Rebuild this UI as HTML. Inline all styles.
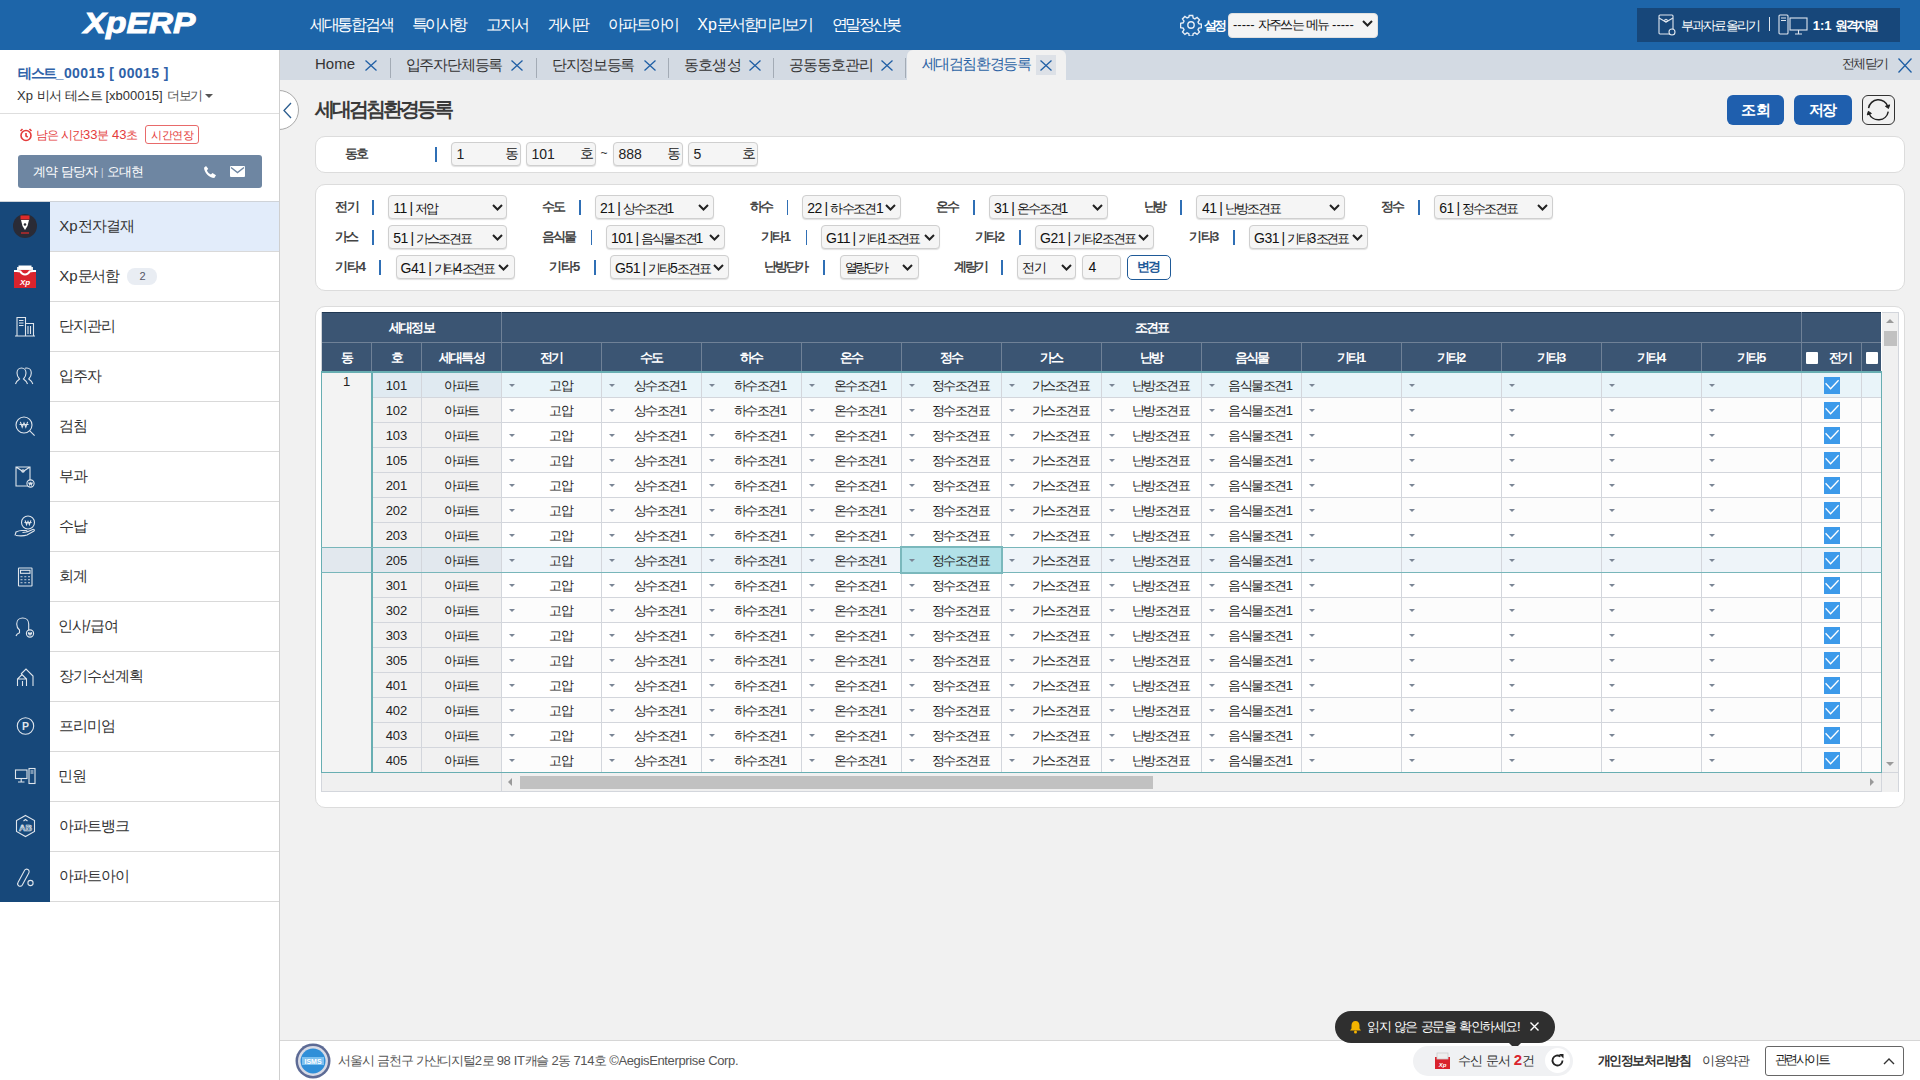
<!DOCTYPE html><html><head><meta charset="utf-8"><style>
*{box-sizing:border-box;margin:0;padding:0}
html,body{width:1920px;height:1080px;overflow:hidden;background:#f1f1f1;font-family:"Liberation Sans",sans-serif;color:#222}
.a{position:absolute;white-space:nowrap}
.k{letter-spacing:var(--k,0);font-size:var(--kf,1em)}
.panel{position:absolute;left:315px;width:1590px;background:#fff;border:1px solid #dcdcdc;border-radius:10px}
.box{position:absolute;height:24px;border:1px solid #cfcfcf;border-radius:4px;background:#f5f5f5;box-shadow:0 1px 1px rgba(0,0,0,.12)}
.bsep{position:absolute;width:2px;height:15px;background:#2f6fb5}
.c{position:absolute;height:25px;border-right:1px solid #d3d6dc;border-bottom:1px solid #d3d6dc;font-size:13px;text-align:center;line-height:25px;color:#222;--k:-1.5px}
.ghd{position:absolute;height:29px;line-height:29px;color:#fff;font-size:13px;font-weight:bold;text-align:center;--k:-1.8px}
.dd{position:absolute;left:7px;top:11px;width:0;height:0;border-left:3px solid transparent;border-right:3px solid transparent;border-top:3px solid #7a8595}
</style></head><body>
<div class="a" style="left:0px;top:0px;width:1920px;height:50px;background:#1d65a9;"></div>
<svg class="a" style="left:80px;top:4px" width="122" height="40" viewBox="0 0 122 40"><text x="3.5" y="29.1" font-size="29.7" font-weight="bold" font-style="italic" fill="#fff" stroke="#fff" stroke-width="0.9" font-family="Liberation Sans" textLength="112" lengthAdjust="spacingAndGlyphs">XpERP</text></svg>
<div class="a" style="left:310.00px;top:13.50px;font-size:16px;line-height:22px;color:#fff;font-weight:normal;--k:-2.30px;"><span class=k>세대통합검색</span></div>
<div class="a" style="left:412.30px;top:13.50px;font-size:16px;line-height:22px;color:#fff;font-weight:normal;--k:-2.87px;"><span class=k>특이사항</span></div>
<div class="a" style="left:486.00px;top:13.50px;font-size:16px;line-height:22px;color:#fff;font-weight:normal;--k:-1.85px;"><span class=k>고지서</span></div>
<div class="a" style="left:548.20px;top:13.50px;font-size:16px;line-height:22px;color:#fff;font-weight:normal;--k:-3.10px;"><span class=k>게시판</span></div>
<div class="a" style="left:608.30px;top:13.50px;font-size:16px;line-height:22px;color:#fff;font-weight:normal;--k:-2.00px;"><span class=k>아파트아이</span></div>
<div class="a" style="left:697.30px;top:13.50px;font-size:16px;line-height:22px;color:#fff;font-weight:normal;--k:-2.50px;">Xp<span class=k>문서함미리보기</span></div>
<div class="a" style="left:831.70px;top:13.50px;font-size:16px;line-height:22px;color:#fff;font-weight:normal;--k:-2.43px;"><span class=k>연말정산봇</span></div>
<svg class="a" style="left:1180px;top:14px" width="22" height="22" viewBox="0 0 22 22"><g fill="none" stroke="#e8eef6" stroke-width="1.4"><path d="M9.3 1.5h3.4l.5 2.6 1.7.8 2.2-1.5 2.4 2.4-1.5 2.2.8 1.7 2.6.5v3.4l-2.6.5-.8 1.7 1.5 2.2-2.4 2.4-2.2-1.5-1.7.8-.5 2.6H9.3l-.5-2.6-1.7-.8-2.2 1.5-2.4-2.4 1.5-2.2-.8-1.7-2.6-.5V9.3l2.6-.5.8-1.7-1.5-2.2 2.4-2.4 2.2 1.5 1.7-.8z"/><circle cx="11" cy="11" r="3.2"/></g></svg>
<div class="a" style="left:1204.00px;top:16.60px;font-size:13px;line-height:17px;color:#fff;font-weight:bold;--k:-3.50px;"><span class=k>설정</span></div>
<div class="a" style="left:1228px;top:13px;width:150px;height:25px;background:#f4f4f4;border-radius:4px;border:1px solid #e0e0e0"></div>
<div class="a" style="left:1233.00px;top:15.80px;font-size:13px;line-height:18px;color:#111;font-weight:normal;--k:-1.90px;">----- <span class=k>자주쓰는</span> <span class=k>메뉴</span> -----</div>
<svg class="a" style="left:1362px;top:20px" width="11" height="7" viewBox="0 0 11 7"><path d="M1 1l4.5 4.5L10 1" fill="none" stroke="#222" stroke-width="2"/></svg>
<div class="a" style="left:1637px;top:8px;width:263px;height:34px;background:#17477a;"></div>
<svg class="a" style="left:1658px;top:14px" width="18" height="22" viewBox="0 0 18 22"><g fill="none" stroke="#dfe6ee" stroke-width="1.1"><rect x="1" y="1" width="14" height="19" rx="1"/><path d="M1 4l7 4 7-4"/><circle cx="8" cy="6.5" r="1.3"/><circle cx="14" cy="18" r="3" fill="#17477a"/></g></svg>
<div class="a" style="left:1680.70px;top:16.50px;font-size:13px;line-height:18px;color:#fff;font-weight:normal;--k:-1.78px;"><span class=k>부과자료올리기</span></div>
<div class="a" style="left:1769px;top:17px;width:1px;height:14px;background:#dfe6ee;"></div>
<svg class="a" style="left:1778px;top:14px" width="32" height="22" viewBox="0 0 32 22"><g fill="none" stroke="#dfe6ee" stroke-width="1.1"><rect x="1" y="1" width="9" height="19" rx="1"/><path d="M3 4h5M3 6.5h5"/><rect x="12" y="4" width="17" height="12"/><path d="M17 20h7M20.5 16v4"/></g></svg>
<div class="a" style="left:1812.75px;top:16.50px;font-size:13px;line-height:18px;color:#fff;font-weight:bold;--k:-2.65px;">1:1 <span class=k>원격지원</span></div>
<div class="a" style="left:0px;top:50px;width:280px;height:1030px;background:#fff;border-right:1px solid #cfcfcf"></div>
<div class="a" style="left:18.30px;top:63.50px;font-size:14px;line-height:18px;color:#2f62a8;font-weight:bold;--k:-1.53px;;letter-spacing:0.4px"><span class=k>테스트</span>_00015 [ 00015 ]</div>
<div class="a" style="left:17.00px;top:86.50px;font-size:13px;line-height:17px;color:#333;font-weight:normal;--k:-0.66px;;letter-spacing:0px">Xp <span class=k>비서</span> <span class=k>테스트</span> [xb00015]</div>
<div class="a" style="left:167.30px;top:86.50px;font-size:13px;line-height:17px;color:#555;font-weight:normal;--k:-1.65px;"><span class=k>더보기</span></div>
<div class="a" style="left:205px;top:94px;width:0;height:0;border-left:4px solid transparent;border-right:4px solid transparent;border-top:4px solid #555"></div>
<div class="a" style="left:0px;top:113px;width:279px;height:1px;background:#dedede;"></div>
<svg class="a" style="left:19px;top:128px" width="14" height="14" viewBox="0 0 14 14"><g fill="none" stroke="#e43b3b" stroke-width="1.6"><circle cx="7" cy="7.5" r="5"/><path d="M7 5v3l1.8 1.2M1.5 3l2-2M12.5 3l-2-2"/></g></svg>
<div class="a" style="left:35.70px;top:126.00px;font-size:13px;line-height:17px;color:#e43b3b;font-weight:normal;--k:-1.08px;;--kf:0.92em"><span class=k>남은</span> <span class=k>시간</span>33<span class=k>분</span> 43<span class=k>초</span></div>
<div class="a" style="left:145px;top:125px;width:54px;height:19px;background:#fff;border:1px solid #e86a6a;border-radius:3px"></div>
<div class="a" style="left:151.30px;top:126.50px;font-size:12px;line-height:16px;color:#e43b3b;font-weight:normal;--k:-0.53px;;--kf:0.92em"><span class=k>시간연장</span></div>
<div class="a" style="left:18px;top:155px;width:244px;height:33px;background:#6e86a2;border-radius:3px"></div>
<div class="a" style="left:33.00px;top:162.50px;font-size:13px;line-height:17px;color:#fff;font-weight:normal;--k:-0.90px;"><span class=k>계약</span> <span class=k>담당자</span> <span style="color:#c8d2de;font-size:11px">|</span> <span class=k>오대현</span></div>
<svg class="a" style="left:203px;top:165px" width="14" height="14" viewBox="0 0 14 14"><path d="M3 1l2.2 2.8-1.3 1.6c.8 1.8 2.2 3.2 4 4l1.6-1.3L13 10.3 11.3 13C6 12.5 1.5 8 1 2.7z" fill="#fff"/></svg>
<svg class="a" style="left:230px;top:166px" width="15" height="11" viewBox="0 0 15 11"><rect width="15" height="11" rx="1" fill="#fff"/><path d="M1 1.5l6.5 5 6.5-5" fill="none" stroke="#6e86a2" stroke-width="1.4"/></svg>
<div class="a" style="left:0px;top:201px;width:279px;height:1px;background:#cfd3d8;"></div>
<div class="a" style="left:0px;top:202px;width:279px;height:50px;background:#e2ecfa;border-bottom:1px solid #d9d9d9"></div>
<svg class="a" style="left:0;top:202px" width="50" height="50" viewBox="0 0 50 50"><rect width="50" height="50" fill="#17487a"/><g transform="translate(0,-2)"><circle cx="25" cy="26" r="12" fill="#2a2b36"/><path d="M20.5 15.5h9v4h-9z" fill="#e02a2a"/><path d="M21 20h8l-1.5 6-2.5 4-2.5-4z" fill="#fff"/><circle cx="25" cy="24.5" r="1.3" fill="#2a2b36"/><path d="M21 33h8" stroke="#e02a2a" stroke-width="1.2"/></g></svg>
<div class="a" style="left:59.30px;top:216.30px;font-size:15px;line-height:20px;color:#333;font-weight:normal;--k:-0.77px;">Xp<span class=k>전자결재</span></div>
<div class="a" style="left:0px;top:252px;width:279px;height:50px;background:#fff;border-bottom:1px solid #d9d9d9"></div>
<svg class="a" style="left:0;top:252px" width="50" height="50" viewBox="0 0 50 50"><rect width="50" height="50" fill="#17487a"/><g transform="translate(0,-2)"><path d="M17 17h16v6H17z" fill="#e8e8e8"/><path d="M18.5 15.5h13v4h-13z" fill="#fff"/><path d="M14 20h22v18H14z" fill="#d9232d"/><path d="M14 20c3 0 5 0 7 .5 1 2 2.5 3 4 3s3-1 4-3c2-.5 4-.5 7-.5v2c-2 0-4 0-5.5.3-1.2 2-3 3.2-5.5 3.2s-4.3-1.2-5.5-3.2C18 22 16 22 14 22z" fill="#fff"/><text x="25" y="35" font-size="8" font-weight="bold" font-style="italic" fill="#fff" text-anchor="middle" font-family="Liberation Sans">Xp</text></g></svg>
<div class="a" style="left:59.30px;top:266.30px;font-size:15px;line-height:20px;color:#333;font-weight:normal;--k:-1.40px;">Xp<span class=k>문서함</span></div>
<div class="a" style="left:0px;top:302px;width:279px;height:50px;background:#fff;border-bottom:1px solid #d9d9d9"></div>
<svg class="a" style="left:0;top:302px" width="50" height="50" viewBox="0 0 50 50"><rect width="50" height="50" fill="#17487a"/><g transform="translate(0,-2)"><g fill="none" stroke="#dfe5ec" stroke-width="1.1"><path d="M17 17.5h8.5v18.5H17zM25.5 23.5h8v12.5h-8M15 36h20M19 20.5h4.5M19 23h4.5M19 25.5h4.5M28 26v8M30.5 26v8"/></g></g></svg>
<div class="a" style="left:59.30px;top:316.30px;font-size:15px;line-height:20px;color:#333;font-weight:normal;--k:-1.08px;"><span class=k>단지관리</span></div>
<div class="a" style="left:0px;top:352px;width:279px;height:50px;background:#fff;border-bottom:1px solid #d9d9d9"></div>
<svg class="a" style="left:0;top:352px" width="50" height="50" viewBox="0 0 50 50"><rect width="50" height="50" fill="#17487a"/><g transform="translate(0,-2)"><g fill="none" stroke="#dfe5ec" stroke-width="1.1"><path d="M15.5 34c1-3 2.5-4 4-5-1.5-1.5-2.5-3.5-2.5-6 0-3 2-5 4.5-5s4.5 2 4.5 5c0 2.5-1 4.5-2.5 6 1.5 1 3 2 4 5"/><path d="M25 18.3c.6-.2 1.2-.3 1.8-.3 2.5 0 4.5 2 4.5 5 0 2.5-1 4.5-2.5 6 1.5 1 3 2 4 5"/></g></g></svg>
<div class="a" style="left:59.30px;top:366.30px;font-size:15px;line-height:20px;color:#333;font-weight:normal;--k:-1.08px;"><span class=k>입주자</span></div>
<div class="a" style="left:0px;top:402px;width:279px;height:50px;background:#fff;border-bottom:1px solid #d9d9d9"></div>
<svg class="a" style="left:0;top:402px" width="50" height="50" viewBox="0 0 50 50"><rect width="50" height="50" fill="#17487a"/><g transform="translate(0,-2)"><circle cx="24" cy="25" r="8" fill="none" stroke="#dfe5ec" stroke-width="1.1"/><path d="M29.8 30.8l4.8 4.8" fill="none" stroke="#dfe5ec" stroke-width="1.1"/><path d="M20.4 21.8l1.7999999999999998 5.4l1.7999999999999998 -4.199999999999999l1.7999999999999998 4.199999999999999l1.7999999999999998 -5.4M19.5 24.5h9.0" fill="none" stroke="#dfe5ec" stroke-width="1.1"/></g></svg>
<div class="a" style="left:59.30px;top:416.30px;font-size:15px;line-height:20px;color:#333;font-weight:normal;--k:-1.08px;"><span class=k>검침</span></div>
<div class="a" style="left:0px;top:452px;width:279px;height:50px;background:#fff;border-bottom:1px solid #d9d9d9"></div>
<svg class="a" style="left:0;top:452px" width="50" height="50" viewBox="0 0 50 50"><rect width="50" height="50" fill="#17487a"/><g transform="translate(0,-2)"><g fill="none" stroke="#dfe5ec" stroke-width="1.1"><path d="M16 17h14v19H16zM16 17l7 4.5 7-4.5"/><circle cx="23" cy="21" r="1.2"/></g><circle cx="30.5" cy="33.5" r="3.6" fill="#17487a" stroke="#dfe5ec" stroke-width="1.1"/><path d="M28.82 32.24l0.84 2.52l0.84 -1.9599999999999997l0.84 1.9599999999999997l0.84 -2.52M28.4 33.5h4.199999999999999" fill="none" stroke="#dfe5ec" stroke-width="1.1"/></g></svg>
<div class="a" style="left:59.30px;top:466.30px;font-size:15px;line-height:20px;color:#333;font-weight:normal;--k:-1.08px;"><span class=k>부과</span></div>
<div class="a" style="left:0px;top:502px;width:279px;height:50px;background:#fff;border-bottom:1px solid #d9d9d9"></div>
<svg class="a" style="left:0;top:502px" width="50" height="50" viewBox="0 0 50 50"><rect width="50" height="50" fill="#17487a"/><g transform="translate(0,-2)"><circle cx="28" cy="22.5" r="6.5" fill="none" stroke="#dfe5ec" stroke-width="1.1"/><path d="M25.12 20.34l1.44 4.32l1.44 -3.36l1.44 3.36l1.44 -4.32M24.4 22.5h7.199999999999999" fill="none" stroke="#dfe5ec" stroke-width="1.1"/><path d="M15 35.5l1-3.5c2-1 4-1.5 6-1.5h4c1 0 1.5 1 .5 1.5l-4 .5M16 35.5c4 .5 8 .5 11-.5l7-4c1-1-.2-2-1.3-1.6L27 32" fill="none" stroke="#dfe5ec" stroke-width="1.1"/></g></svg>
<div class="a" style="left:59.30px;top:516.30px;font-size:15px;line-height:20px;color:#333;font-weight:normal;--k:-1.08px;"><span class=k>수납</span></div>
<div class="a" style="left:0px;top:552px;width:279px;height:50px;background:#fff;border-bottom:1px solid #d9d9d9"></div>
<svg class="a" style="left:0;top:552px" width="50" height="50" viewBox="0 0 50 50"><rect width="50" height="50" fill="#17487a"/><g transform="translate(0,-2)"><g fill="none" stroke="#dfe5ec" stroke-width="1.1"><rect x="18.5" y="18" width="13.5" height="18" rx=".5"/><rect x="20.5" y="20.3" width="9.5" height="3"/></g><g fill="#9fb2c6"><rect x="20.5" y="26" width="2" height="1.3"/><rect x="24.3" y="26" width="2" height="1.3"/><rect x="28" y="26" width="2" height="1.3"/><rect x="20.5" y="29" width="2" height="1.3"/><rect x="24.3" y="29" width="2" height="1.3"/><rect x="28" y="29" width="2" height="1.3"/><rect x="20.5" y="32" width="2" height="1.3"/><rect x="24.3" y="32" width="2" height="1.3"/><rect x="28" y="32" width="2" height="1.3"/></g></g></svg>
<div class="a" style="left:59.30px;top:566.30px;font-size:15px;line-height:20px;color:#333;font-weight:normal;--k:-1.08px;"><span class=k>회계</span></div>
<div class="a" style="left:0px;top:602px;width:279px;height:50px;background:#fff;border-bottom:1px solid #d9d9d9"></div>
<svg class="a" style="left:0;top:602px" width="50" height="50" viewBox="0 0 50 50"><rect width="50" height="50" fill="#17487a"/><g transform="translate(0,-2)"><path d="M16 36c.5-1.5 2-2.5 3.5-3.2v-2.8c-1.8-1.5-2.8-3.5-2.8-6 0-3.5 2.5-6 6-6s6 2.5 6 6v6" fill="none" stroke="#dfe5ec" stroke-width="1.1"/><circle cx="30" cy="33.5" r="3.6" fill="#17487a" stroke="#dfe5ec" stroke-width="1.1"/><path d="M28.32 32.24l0.84 2.52l0.84 -1.9599999999999997l0.84 1.9599999999999997l0.84 -2.52M27.9 33.5h4.199999999999999" fill="none" stroke="#dfe5ec" stroke-width="1.1"/></g></svg>
<div class="a" style="left:58.30px;top:616.30px;font-size:15px;line-height:20px;color:#333;font-weight:normal;--k:-1.08px;"><span class=k>인사</span>/<span class=k>급여</span></div>
<div class="a" style="left:0px;top:652px;width:279px;height:50px;background:#fff;border-bottom:1px solid #d9d9d9"></div>
<svg class="a" style="left:0;top:652px" width="50" height="50" viewBox="0 0 50 50"><rect width="50" height="50" fill="#17487a"/><g transform="translate(0,-2)"><path d="M17.5 36v-7l4.5-4.5 4.5 4.5M17.5 29h9v7M22.5 36v-5M21 24l5-5 7 7v10" fill="none" stroke="#dfe5ec" stroke-width="1.1" stroke-width="1.3"/></g></svg>
<div class="a" style="left:59.30px;top:666.30px;font-size:15px;line-height:20px;color:#333;font-weight:normal;--k:-1.08px;"><span class=k>장기수선계획</span></div>
<div class="a" style="left:0px;top:702px;width:279px;height:50px;background:#fff;border-bottom:1px solid #d9d9d9"></div>
<svg class="a" style="left:0;top:702px" width="50" height="50" viewBox="0 0 50 50"><rect width="50" height="50" fill="#17487a"/><g transform="translate(0,-2)"><circle cx="25.5" cy="26" r="8.2" fill="none" stroke="#dfe5ec" stroke-width="1.1"/><text x="25.5" y="29.8" font-size="10.5" font-weight="bold" fill="#dfe5ec" text-anchor="middle" font-family="Liberation Sans">P</text></g></svg>
<div class="a" style="left:59.30px;top:716.30px;font-size:15px;line-height:20px;color:#333;font-weight:normal;--k:-1.08px;"><span class=k>프리미엄</span></div>
<div class="a" style="left:0px;top:752px;width:279px;height:50px;background:#fff;border-bottom:1px solid #d9d9d9"></div>
<svg class="a" style="left:0;top:752px" width="50" height="50" viewBox="0 0 50 50"><rect width="50" height="50" fill="#17487a"/><g transform="translate(0,-2)"><g fill="none" stroke="#dfe5ec" stroke-width="1.1"><rect x="15.5" y="20" width="11.5" height="8.5"/><path d="M21.2 28.5v3M18 32h6.5"/><rect x="29" y="18.5" width="6" height="15"/><path d="M30.5 21h3M30.5 23h3"/></g></g></svg>
<div class="a" style="left:58.30px;top:766.30px;font-size:15px;line-height:20px;color:#333;font-weight:normal;--k:-1.08px;"><span class=k>민원</span></div>
<div class="a" style="left:0px;top:802px;width:279px;height:50px;background:#fff;border-bottom:1px solid #d9d9d9"></div>
<svg class="a" style="left:0;top:802px" width="50" height="50" viewBox="0 0 50 50"><rect width="50" height="50" fill="#17487a"/><g transform="translate(0,-2)"><path d="M25.5 15.5l9 5v11l-9 5-9-5v-11z" fill="none" stroke="#dfe5ec" stroke-width="1.1" stroke-width="1.3"/><text x="25.5" y="31" font-size="9" font-weight="bold" fill="none" stroke="#dfe5ec" stroke-width=".7" text-anchor="middle" font-family="Liberation Sans">AB</text><path d="M23.5 21l2-1.5 2 1.5" fill="none" stroke="#dfe5ec" stroke-width="1.1"/></g></svg>
<div class="a" style="left:59.30px;top:816.30px;font-size:15px;line-height:20px;color:#333;font-weight:normal;--k:-1.08px;"><span class=k>아파트뱅크</span></div>
<div class="a" style="left:0px;top:852px;width:279px;height:50px;background:#fff;border-bottom:1px solid #d9d9d9"></div>
<svg class="a" style="left:0;top:852px" width="50" height="50" viewBox="0 0 50 50"><rect width="50" height="50" fill="#17487a"/><g transform="translate(0,-2)"><path d="M18 32.5l6.5-12c.7-1.3 2.2-1.7 3.4-1s1.6 2.2.9 3.4l-6.5 12c-.7 1.3-2.2 1.7-3.4 1s-1.6-2.2-.9-3.4z" fill="none" stroke="#dfe5ec" stroke-width="1.1" stroke-width="1.2"/><circle cx="30.5" cy="33" r="2.6" fill="none" stroke="#dfe5ec" stroke-width="1.1" stroke-width="1.2"/></g></svg>
<div class="a" style="left:59.30px;top:866.30px;font-size:15px;line-height:20px;color:#333;font-weight:normal;--k:-1.08px;"><span class=k>아파트아이</span></div>
<div class="a" style="left:127px;top:268px;width:30px;height:17px;background:#e9edf3;border-radius:8px"></div>
<div class="a" style="left:139.50px;top:269.00px;font-size:11px;line-height:14px;color:#556;font-weight:normal;--k:-1.54px;">2</div>
<div class="a" style="left:280px;top:50px;width:1640px;height:30px;background:#d3dae3;"></div>
<div class="a" style="left:315.00px;top:55.30px;font-size:15px;line-height:18px;color:#333;font-weight:normal;--k:-2.10px;">Home</div>
<svg class="a" style="left:365px;top:60px" width="12" height="11" viewBox="0 0 12 11"><path d="M.5 .5L11.5 10.5M11.5 .5L.5 10.5" stroke="#1f5fa5" stroke-width="1.3"/></svg>
<div class="a" style="left:390px;top:58px;width:1px;height:20px;background:#a3abb5;"></div>
<div class="a" style="left:405.70px;top:55.60px;font-size:15px;line-height:18px;color:#333;font-weight:normal;--k:-1.22px;"><span class=k>입주자단체등록</span></div>
<svg class="a" style="left:511px;top:60px" width="12" height="11" viewBox="0 0 12 11"><path d="M.5 .5L11.5 10.5M11.5 .5L.5 10.5" stroke="#1f5fa5" stroke-width="1.3"/></svg>
<div class="a" style="left:536px;top:58px;width:1px;height:20px;background:#a3abb5;"></div>
<div class="a" style="left:552.00px;top:55.60px;font-size:15px;line-height:18px;color:#333;font-weight:normal;--k:-1.34px;"><span class=k>단지정보등록</span></div>
<svg class="a" style="left:644px;top:60px" width="12" height="11" viewBox="0 0 12 11"><path d="M.5 .5L11.5 10.5M11.5 .5L.5 10.5" stroke="#1f5fa5" stroke-width="1.3"/></svg>
<div class="a" style="left:668px;top:58px;width:1px;height:20px;background:#a3abb5;"></div>
<div class="a" style="left:684.00px;top:55.60px;font-size:15px;line-height:18px;color:#333;font-weight:normal;--k:-0.77px;"><span class=k>동호생성</span></div>
<svg class="a" style="left:749px;top:60px" width="12" height="11" viewBox="0 0 12 11"><path d="M.5 .5L11.5 10.5M11.5 .5L.5 10.5" stroke="#1f5fa5" stroke-width="1.3"/></svg>
<div class="a" style="left:773px;top:58px;width:1px;height:20px;background:#a3abb5;"></div>
<div class="a" style="left:789.30px;top:55.60px;font-size:15px;line-height:18px;color:#333;font-weight:normal;--k:-1.14px;"><span class=k>공동동호관리</span></div>
<svg class="a" style="left:881px;top:60px" width="12" height="11" viewBox="0 0 12 11"><path d="M.5 .5L11.5 10.5M11.5 .5L.5 10.5" stroke="#1f5fa5" stroke-width="1.3"/></svg>
<div class="a" style="left:905px;top:58px;width:1px;height:20px;background:#a3abb5;"></div>
<div class="a" style="left:907px;top:50px;width:159px;height:30px;background:#f1f1f1;border-radius:6px 6px 0 0"></div>
<div class="a" style="left:921.70px;top:55.00px;font-size:15px;line-height:18px;color:#2d64a5;font-weight:normal;--k:-1.43px;"><span class=k>세대검침환경등록</span></div>
<div class="a" style="left:1036px;top:55px;width:20px;height:20px;background:#dde1e7;"></div>
<svg class="a" style="left:1040px;top:60px" width="12" height="11" viewBox="0 0 12 11"><path d="M.5 .5L11.5 10.5M11.5 .5L.5 10.5" stroke="#1f5fa5" stroke-width="1.3"/></svg>
<div class="a" style="left:1842.30px;top:55.00px;font-size:13px;line-height:18px;color:#333;font-weight:normal;--k:-1.87px;"><span class=k>전체닫기</span></div>
<svg class="a" style="left:1898px;top:58px" width="14" height="15" viewBox="0 0 14 15"><path d="M.5 .5L13.5 14.5M13.5 .5L.5 14.5" stroke="#1f5fa5" stroke-width="1.3"/></svg>
<div class="a" style="left:259px;top:90px;width:40px;height:40px;border-radius:50%;background:#fff;border:1px solid #a8a8a8;clip-path:inset(0 0 0 21px)"></div>
<svg class="a" style="left:282.5px;top:101.5px" width="9" height="17" viewBox="0 0 9 17"><path d="M8 1L1 8.5 8 16" fill="none" stroke="#2b5d8f" stroke-width="1.3"/></svg>
<div class="a" style="left:315.00px;top:95.80px;font-size:20px;line-height:26px;color:#3a3a3a;font-weight:bold;--k:-3.00px;"><span class=k>세대검침환경등록</span></div>
<div class="a" style="left:1727px;top:95px;width:57px;height:30px;background:#1f5fae;border-radius:6px"></div>
<div class="a" style="left:1740.70px;top:99.70px;font-size:15px;line-height:20px;color:#fff;font-weight:bold;--k:0.60px;"><span class=k>조회</span></div>
<div class="a" style="left:1794px;top:95px;width:58px;height:30px;background:#1f5fae;border-radius:6px"></div>
<div class="a" style="left:1809.00px;top:99.70px;font-size:15px;line-height:20px;color:#fff;font-weight:bold;--k:-1.70px;"><span class=k>저장</span></div>
<div class="a" style="left:1862px;top:95px;width:33px;height:30px;background:transparent;border:1px solid #333;border-radius:6px"></div>
<svg class="a" style="left:1866px;top:98px" width="25" height="24" viewBox="0 0 25 24"><g fill="none" stroke="#222" stroke-width="1.5"><path d="M2.55 10.06A10 10 0 0 1 21.86 8.54"/><path d="M22.25 13.54A10 10 0 0 1 3.0 15.22"/></g><path d="M22.51 10.43L23.61 6.87L19.45 8.31z" fill="#222" stroke="#222" stroke-width="1"/><path d="M2.32 13.34L1.27 16.91L5.41 15.41z" fill="#222" stroke="#222" stroke-width="1"/></svg>
<div class="panel" style="top:136px;height:37px"></div>
<div class="a" style="left:344.90px;top:144.70px;font-size:13px;line-height:17px;color:#444;font-weight:bold;--k:-1.40px;"><span class=k>동호</span></div>
<div class="bsep" style="left:435px;top:147px;width:1.5px"></div>
<div class="box" style="left:451px;top:142px;width:70px"></div>
<div class="a" style="left:456.50px;top:144.50px;font-size:14px;line-height:18px;color:#222;font-weight:normal;--k:-1.96px;">1</div>
<div class="a" style="left:504.50px;top:144.00px;font-size:14px;line-height:18px;color:#222;font-weight:normal;--k:0.00px;"><span class=k>동</span></div>
<div class="box" style="left:526px;top:142px;width:70px"></div>
<div class="a" style="left:531.50px;top:144.50px;font-size:14px;line-height:18px;color:#222;font-weight:normal;--k:-1.96px;">101</div>
<div class="a" style="left:579.50px;top:144.00px;font-size:14px;line-height:18px;color:#222;font-weight:normal;--k:0.00px;"><span class=k>호</span></div>
<div class="box" style="left:613px;top:142px;width:70px"></div>
<div class="a" style="left:618.50px;top:144.50px;font-size:14px;line-height:18px;color:#222;font-weight:normal;--k:-1.96px;">888</div>
<div class="a" style="left:666.50px;top:144.00px;font-size:14px;line-height:18px;color:#222;font-weight:normal;--k:0.00px;"><span class=k>동</span></div>
<div class="box" style="left:688px;top:142px;width:70px"></div>
<div class="a" style="left:693.50px;top:144.50px;font-size:14px;line-height:18px;color:#222;font-weight:normal;--k:-1.96px;">5</div>
<div class="a" style="left:741.50px;top:144.00px;font-size:14px;line-height:18px;color:#222;font-weight:normal;--k:0.00px;"><span class=k>호</span></div>
<div class="a" style="left:600.60px;top:145.00px;font-size:12px;line-height:16px;color:#333;font-weight:normal;--k:-1.68px;">~</div>
<div class="panel" style="top:184px;height:107px"></div>
<div class="a" style="left:335.25px;top:198.00px;font-size:13px;line-height:17px;color:#444;font-weight:bold;--k:-1.15px;"><span class=k>전기</span></div>
<div class="bsep" style="left:372px;top:200px;width:1.5px"></div>
<div class="box" style="left:388px;top:195px;width:119px"></div>
<div class="a" style="left:393.30px;top:198.50px;font-size:14px;line-height:18px;color:#111;font-weight:normal;--k:-2.12px;word-spacing:-0.8px;--kf:0.96em;letter-spacing:-0.5px">11 | <span class=k>저압</span></div>
<svg class="a" style="left:492px;top:204px" width="11" height="7" viewBox="0 0 11 7"><path d="M1 1l4.5 4.5L10 1" fill="none" stroke="#222" stroke-width="2"/></svg>
<div class="a" style="left:542.30px;top:198.00px;font-size:13px;line-height:17px;color:#444;font-weight:bold;--k:-2.10px;"><span class=k>수도</span></div>
<div class="bsep" style="left:579px;top:200px;width:1.5px"></div>
<div class="box" style="left:595px;top:195px;width:119px"></div>
<div class="a" style="left:600.00px;top:198.50px;font-size:14px;line-height:18px;color:#111;font-weight:normal;--k:-2.12px;word-spacing:-0.8px;--kf:0.96em;letter-spacing:-0.5px">21 | <span class=k>상수조견</span>1</div>
<svg class="a" style="left:698px;top:204px" width="11" height="7" viewBox="0 0 11 7"><path d="M1 1l4.5 4.5L10 1" fill="none" stroke="#222" stroke-width="2"/></svg>
<div class="a" style="left:750.20px;top:198.00px;font-size:13px;line-height:17px;color:#444;font-weight:bold;--k:-2.40px;"><span class=k>하수</span></div>
<div class="bsep" style="left:786.5px;top:200px;width:1.5px"></div>
<div class="box" style="left:802px;top:195px;width:99px"></div>
<div class="a" style="left:807.30px;top:198.50px;font-size:14px;line-height:18px;color:#111;font-weight:normal;--k:-1.57px;word-spacing:-0.8px;--kf:0.96em;letter-spacing:-0.5px">22 | <span class=k>하수조견</span>1</div>
<svg class="a" style="left:885px;top:204px" width="11" height="7" viewBox="0 0 11 7"><path d="M1 1l4.5 4.5L10 1" fill="none" stroke="#222" stroke-width="2"/></svg>
<div class="a" style="left:936.20px;top:198.00px;font-size:13px;line-height:17px;color:#444;font-weight:bold;--k:-1.70px;"><span class=k>온수</span></div>
<div class="bsep" style="left:973px;top:200px;width:1.5px"></div>
<div class="box" style="left:989px;top:195px;width:119px"></div>
<div class="a" style="left:994.00px;top:198.50px;font-size:14px;line-height:18px;color:#111;font-weight:normal;--k:-2.12px;word-spacing:-0.8px;--kf:0.96em;letter-spacing:-0.5px">31 | <span class=k>온수조견</span>1</div>
<svg class="a" style="left:1092px;top:204px" width="11" height="7" viewBox="0 0 11 7"><path d="M1 1l4.5 4.5L10 1" fill="none" stroke="#222" stroke-width="2"/></svg>
<div class="a" style="left:1143.80px;top:198.00px;font-size:13px;line-height:17px;color:#444;font-weight:bold;--k:-2.80px;"><span class=k>난방</span></div>
<div class="bsep" style="left:1180px;top:200px;width:1.5px"></div>
<div class="box" style="left:1196px;top:195px;width:149px"></div>
<div class="a" style="left:1202.00px;top:198.50px;font-size:14px;line-height:18px;color:#111;font-weight:normal;--k:-2.05px;word-spacing:-0.8px;--kf:0.96em;letter-spacing:-0.5px">41 | <span class=k>난방조견표</span></div>
<svg class="a" style="left:1329px;top:204px" width="11" height="7" viewBox="0 0 11 7"><path d="M1 1l4.5 4.5L10 1" fill="none" stroke="#222" stroke-width="2"/></svg>
<div class="a" style="left:1381.00px;top:198.00px;font-size:13px;line-height:17px;color:#444;font-weight:bold;--k:-2.10px;"><span class=k>정수</span></div>
<div class="bsep" style="left:1418px;top:200px;width:1.5px"></div>
<div class="box" style="left:1434px;top:195px;width:119px"></div>
<div class="a" style="left:1439.30px;top:198.50px;font-size:14px;line-height:18px;color:#111;font-weight:normal;--k:-2.10px;word-spacing:-0.8px;--kf:0.96em;letter-spacing:-0.5px">61 | <span class=k>정수조견표</span></div>
<svg class="a" style="left:1537px;top:204px" width="11" height="7" viewBox="0 0 11 7"><path d="M1 1l4.5 4.5L10 1" fill="none" stroke="#222" stroke-width="2"/></svg>
<div class="a" style="left:335.25px;top:228.00px;font-size:13px;line-height:17px;color:#444;font-weight:bold;--k:-1.85px;"><span class=k>가스</span></div>
<div class="bsep" style="left:372px;top:230px;width:1.5px"></div>
<div class="box" style="left:388px;top:225px;width:119px"></div>
<div class="a" style="left:393.30px;top:228.50px;font-size:14px;line-height:18px;color:#111;font-weight:normal;--k:-2.03px;word-spacing:-0.8px;--kf:0.96em;letter-spacing:-0.5px">51 | <span class=k>가스조견표</span></div>
<svg class="a" style="left:492px;top:234px" width="11" height="7" viewBox="0 0 11 7"><path d="M1 1l4.5 4.5L10 1" fill="none" stroke="#222" stroke-width="2"/></svg>
<div class="a" style="left:542.30px;top:228.00px;font-size:13px;line-height:17px;color:#444;font-weight:bold;--k:-2.10px;"><span class=k>음식물</span></div>
<div class="bsep" style="left:590.5px;top:230px;width:1.5px"></div>
<div class="box" style="left:606px;top:225px;width:119px"></div>
<div class="a" style="left:611.00px;top:228.50px;font-size:14px;line-height:18px;color:#111;font-weight:normal;--k:-2.12px;word-spacing:-0.8px;--kf:0.96em;letter-spacing:-0.5px">101 | <span class=k>음식물조견</span>1</div>
<svg class="a" style="left:709px;top:234px" width="11" height="7" viewBox="0 0 11 7"><path d="M1 1l4.5 4.5L10 1" fill="none" stroke="#222" stroke-width="2"/></svg>
<div class="a" style="left:760.90px;top:228.00px;font-size:13px;line-height:17px;color:#444;font-weight:bold;--k:-1.55px;"><span class=k>기타</span>1</div>
<div class="bsep" style="left:805.5px;top:230px;width:1.5px"></div>
<div class="box" style="left:821px;top:225px;width:119px"></div>
<div class="a" style="left:826.00px;top:228.50px;font-size:14px;line-height:18px;color:#111;font-weight:normal;--k:-2.38px;word-spacing:-0.8px;--kf:0.96em;letter-spacing:-0.5px">G11 | <span class=k>기타</span>1<span class=k>조견표</span></div>
<svg class="a" style="left:924px;top:234px" width="11" height="7" viewBox="0 0 11 7"><path d="M1 1l4.5 4.5L10 1" fill="none" stroke="#222" stroke-width="2"/></svg>
<div class="a" style="left:974.90px;top:228.00px;font-size:13px;line-height:17px;color:#444;font-weight:bold;--k:-1.55px;"><span class=k>기타</span>2</div>
<div class="bsep" style="left:1019px;top:230px;width:1.5px"></div>
<div class="box" style="left:1035px;top:225px;width:119px"></div>
<div class="a" style="left:1040.00px;top:228.50px;font-size:14px;line-height:18px;color:#111;font-weight:normal;--k:-2.12px;word-spacing:-0.8px;--kf:0.96em;letter-spacing:-0.5px">G21 | <span class=k>기타</span>2<span class=k>조견표</span></div>
<svg class="a" style="left:1138px;top:234px" width="11" height="7" viewBox="0 0 11 7"><path d="M1 1l4.5 4.5L10 1" fill="none" stroke="#222" stroke-width="2"/></svg>
<div class="a" style="left:1189.20px;top:228.00px;font-size:13px;line-height:17px;color:#444;font-weight:bold;--k:-1.60px;"><span class=k>기타</span>3</div>
<div class="bsep" style="left:1233px;top:230px;width:1.5px"></div>
<div class="box" style="left:1249px;top:225px;width:119px"></div>
<div class="a" style="left:1254.00px;top:228.50px;font-size:14px;line-height:18px;color:#111;font-weight:normal;--k:-2.38px;word-spacing:-0.8px;--kf:0.96em;letter-spacing:-0.5px">G31 | <span class=k>기타</span>3<span class=k>조견표</span></div>
<svg class="a" style="left:1352px;top:234px" width="11" height="7" viewBox="0 0 11 7"><path d="M1 1l4.5 4.5L10 1" fill="none" stroke="#222" stroke-width="2"/></svg>
<div class="a" style="left:335.25px;top:258.00px;font-size:13px;line-height:17px;color:#444;font-weight:bold;--k:-1.32px;"><span class=k>기타</span>4</div>
<div class="bsep" style="left:379px;top:260px;width:1.5px"></div>
<div class="box" style="left:396px;top:255px;width:119px"></div>
<div class="a" style="left:400.60px;top:258.50px;font-size:14px;line-height:18px;color:#111;font-weight:normal;--k:-2.58px;word-spacing:-0.8px;--kf:0.96em;letter-spacing:-0.5px">G41 | <span class=k>기타</span>4<span class=k>조견표</span></div>
<svg class="a" style="left:498px;top:264px" width="11" height="7" viewBox="0 0 11 7"><path d="M1 1l4.5 4.5L10 1" fill="none" stroke="#222" stroke-width="2"/></svg>
<div class="a" style="left:549.30px;top:258.00px;font-size:13px;line-height:17px;color:#444;font-weight:bold;--k:-1.15px;"><span class=k>기타</span>5</div>
<div class="bsep" style="left:594px;top:260px;width:1.5px"></div>
<div class="box" style="left:610px;top:255px;width:119px"></div>
<div class="a" style="left:615.00px;top:258.50px;font-size:14px;line-height:18px;color:#111;font-weight:normal;--k:-2.12px;word-spacing:-0.8px;--kf:0.96em;letter-spacing:-0.5px">G51 | <span class=k>기타</span>5<span class=k>조견표</span></div>
<svg class="a" style="left:713px;top:264px" width="11" height="7" viewBox="0 0 11 7"><path d="M1 1l4.5 4.5L10 1" fill="none" stroke="#222" stroke-width="2"/></svg>
<div class="a" style="left:764.00px;top:258.00px;font-size:13px;line-height:17px;color:#444;font-weight:bold;--k:-2.17px;"><span class=k>난방단가</span></div>
<div class="bsep" style="left:823px;top:260px;width:1.5px"></div>
<div class="box" style="left:840px;top:255px;width:79px"></div>
<div class="a" style="left:844.50px;top:257.50px;font-size:14px;line-height:18px;color:#111;font-weight:normal;--k:-2.43px;word-spacing:-0.8px;--kf:0.96em;letter-spacing:-0.5px"><span class=k>열량단가</span></div>
<svg class="a" style="left:902px;top:264px" width="11" height="7" viewBox="0 0 11 7"><path d="M1 1l4.5 4.5L10 1" fill="none" stroke="#222" stroke-width="2"/></svg>
<div class="a" style="left:954.00px;top:258.00px;font-size:13px;line-height:17px;color:#444;font-weight:bold;--k:-2.05px;"><span class=k>계량기</span></div>
<div class="bsep" style="left:1001px;top:260px;width:1.5px"></div>
<div class="box" style="left:1017px;top:255px;width:59px"></div>
<div class="a" style="left:1022.30px;top:257.50px;font-size:14px;line-height:18px;color:#111;font-weight:normal;--k:-1.60px;word-spacing:-0.8px;--kf:0.96em;letter-spacing:-0.5px"><span class=k>전기</span></div>
<svg class="a" style="left:1061px;top:264px" width="11" height="7" viewBox="0 0 11 7"><path d="M1 1l4.5 4.5L10 1" fill="none" stroke="#222" stroke-width="2"/></svg>
<div class="box" style="left:1082px;top:255px;width:39px"></div>
<div class="a" style="left:1088.40px;top:257.50px;font-size:14px;line-height:18px;color:#111;font-weight:normal;--k:-1.96px;">4</div>
<div class="a" style="left:1127px;top:255px;width:44px;height:25px;background:#fff;border:1.5px solid #1f5a98;border-radius:5px"></div>
<div class="a" style="left:1137.40px;top:258.00px;font-size:13px;line-height:17px;color:#1f5a98;font-weight:bold;--k:-2.10px;"><span class=k>변경</span></div>
<div class="panel" style="top:306px;height:502px"></div>
<div class="a" style="left:321px;top:312px;width:1px;height:60px;background:#cfd3d8;"></div>
<div class="a" style="left:322px;top:312px;width:1559px;height:60px;background:#3b5573;"></div>
<div class="a" style="left:322px;top:312px;width:1559px;height:1px;background:#1f3752;"></div>
<div class="a" style="left:322px;top:342px;width:1559px;height:1px;background:#6f8197;"></div>
<div class="a" style="left:501px;top:312px;width:1px;height:60px;background:#6f8197;"></div>
<div class="a" style="left:1801px;top:312px;width:1px;height:60px;background:#6f8197;"></div>
<div class="a" style="left:371px;top:343px;width:1px;height:29px;background:#6f8197;"></div>
<div class="a" style="left:421px;top:343px;width:1px;height:29px;background:#6f8197;"></div>
<div class="a" style="left:601px;top:343px;width:1px;height:29px;background:#6f8197;"></div>
<div class="a" style="left:701px;top:343px;width:1px;height:29px;background:#6f8197;"></div>
<div class="a" style="left:801px;top:343px;width:1px;height:29px;background:#6f8197;"></div>
<div class="a" style="left:901px;top:343px;width:1px;height:29px;background:#6f8197;"></div>
<div class="a" style="left:1001px;top:343px;width:1px;height:29px;background:#6f8197;"></div>
<div class="a" style="left:1101px;top:343px;width:1px;height:29px;background:#6f8197;"></div>
<div class="a" style="left:1201px;top:343px;width:1px;height:29px;background:#6f8197;"></div>
<div class="a" style="left:1301px;top:343px;width:1px;height:29px;background:#6f8197;"></div>
<div class="a" style="left:1401px;top:343px;width:1px;height:29px;background:#6f8197;"></div>
<div class="a" style="left:1501px;top:343px;width:1px;height:29px;background:#6f8197;"></div>
<div class="a" style="left:1601px;top:343px;width:1px;height:29px;background:#6f8197;"></div>
<div class="a" style="left:1701px;top:343px;width:1px;height:29px;background:#6f8197;"></div>
<div class="a" style="left:1861px;top:343px;width:1px;height:29px;background:#6f8197;"></div>
<div class="a ghd" style="left:322px;top:313px;width:179px;"><span class=k>세대정보</span></div>
<div class="a ghd" style="left:502px;top:313px;width:1299px;"><span class=k>조견표</span></div>
<div class="a ghd" style="left:322px;top:343px;width:49px;"><span class=k>동</span></div>
<div class="a ghd" style="left:372px;top:343px;width:49px;"><span class=k>호</span></div>
<div class="a ghd" style="left:422px;top:343px;width:79px;"><span class=k>세대특성</span></div>
<div class="a ghd" style="left:502px;top:343px;width:99px;"><span class=k>전기</span></div>
<div class="a ghd" style="left:602px;top:343px;width:99px;"><span class=k>수도</span></div>
<div class="a ghd" style="left:702px;top:343px;width:99px;"><span class=k>하수</span></div>
<div class="a ghd" style="left:802px;top:343px;width:99px;"><span class=k>온수</span></div>
<div class="a ghd" style="left:902px;top:343px;width:99px;"><span class=k>정수</span></div>
<div class="a ghd" style="left:1002px;top:343px;width:99px;"><span class=k>가스</span></div>
<div class="a ghd" style="left:1102px;top:343px;width:99px;"><span class=k>난방</span></div>
<div class="a ghd" style="left:1202px;top:343px;width:99px;"><span class=k>음식물</span></div>
<div class="a ghd" style="left:1302px;top:343px;width:99px;"><span class=k>기타</span>1</div>
<div class="a ghd" style="left:1402px;top:343px;width:99px;"><span class=k>기타</span>2</div>
<div class="a ghd" style="left:1502px;top:343px;width:99px;"><span class=k>기타</span>3</div>
<div class="a ghd" style="left:1602px;top:343px;width:99px;"><span class=k>기타</span>4</div>
<div class="a ghd" style="left:1702px;top:343px;width:99px;"><span class=k>기타</span>5</div>
<div class="a ghd" style="left:1829px;top:343px;text-align:left"><span class=k>전기</span></div>
<div class="a" style="left:1806px;top:352px;width:12px;height:12px;background:#fff;border-radius:1px"></div>
<div class="a" style="left:1866px;top:352px;width:12px;height:12px;background:#fff;border-radius:1px"></div>
<div class="c" style="left:372px;top:373px;width:50px;background:#e0eaf1">101</div>
<div class="c" style="left:422px;top:373px;width:80px;background:#e0eaf1"><span class=k>아파트</span></div>
<div class="c" style="left:502px;top:373px;width:100px;background:#e9f4f9;padding-left:18px"><i class="dd"></i><span class=k>고압</span></div>
<div class="c" style="left:602px;top:373px;width:100px;background:#e9f4f9;padding-left:18px"><i class="dd"></i><span class=k>상수조견</span>1</div>
<div class="c" style="left:702px;top:373px;width:100px;background:#e9f4f9;padding-left:18px"><i class="dd"></i><span class=k>하수조견</span>1</div>
<div class="c" style="left:802px;top:373px;width:100px;background:#e9f4f9;padding-left:18px"><i class="dd"></i><span class=k>온수조견</span>1</div>
<div class="c" style="left:902px;top:373px;width:100px;background:#e9f4f9;padding-left:18px"><i class="dd"></i><span class=k>정수조견표</span></div>
<div class="c" style="left:1002px;top:373px;width:100px;background:#e9f4f9;padding-left:18px"><i class="dd"></i><span class=k>가스조견표</span></div>
<div class="c" style="left:1102px;top:373px;width:100px;background:#e9f4f9;padding-left:18px"><i class="dd"></i><span class=k>난방조견표</span></div>
<div class="c" style="left:1202px;top:373px;width:100px;background:#e9f4f9;padding-left:18px"><i class="dd"></i><span class=k>음식물조견</span>1</div>
<div class="c" style="left:1302px;top:373px;width:100px;background:#e9f4f9;padding-left:18px"><i class="dd"></i></div>
<div class="c" style="left:1402px;top:373px;width:100px;background:#e9f4f9;padding-left:18px"><i class="dd"></i></div>
<div class="c" style="left:1502px;top:373px;width:100px;background:#e9f4f9;padding-left:18px"><i class="dd"></i></div>
<div class="c" style="left:1602px;top:373px;width:100px;background:#e9f4f9;padding-left:18px"><i class="dd"></i></div>
<div class="c" style="left:1702px;top:373px;width:100px;background:#e9f4f9;padding-left:18px"><i class="dd"></i></div>
<div class="c" style="left:1802px;top:373px;width:60px;background:#e9f4f9"><svg class="a" style="left:22px;top:4px" width="16" height="17" viewBox="0 0 16 17"><rect width="16" height="17" fill="#3c9aea"/><path d="M1.6 6.2l5 5.6 8-8.6" fill="none" stroke="#fff" stroke-width="1.3"/></svg></div>
<div class="c" style="left:1862px;top:373px;width:20px;background:#e9f4f9"></div>
<div class="c" style="left:372px;top:398px;width:50px;background:#f1f1f1">102</div>
<div class="c" style="left:422px;top:398px;width:80px;background:#f1f1f1"><span class=k>아파트</span></div>
<div class="c" style="left:502px;top:398px;width:100px;background:#fcfcfc;padding-left:18px"><i class="dd"></i><span class=k>고압</span></div>
<div class="c" style="left:602px;top:398px;width:100px;background:#fcfcfc;padding-left:18px"><i class="dd"></i><span class=k>상수조견</span>1</div>
<div class="c" style="left:702px;top:398px;width:100px;background:#fcfcfc;padding-left:18px"><i class="dd"></i><span class=k>하수조견</span>1</div>
<div class="c" style="left:802px;top:398px;width:100px;background:#fcfcfc;padding-left:18px"><i class="dd"></i><span class=k>온수조견</span>1</div>
<div class="c" style="left:902px;top:398px;width:100px;background:#fcfcfc;padding-left:18px"><i class="dd"></i><span class=k>정수조견표</span></div>
<div class="c" style="left:1002px;top:398px;width:100px;background:#fcfcfc;padding-left:18px"><i class="dd"></i><span class=k>가스조견표</span></div>
<div class="c" style="left:1102px;top:398px;width:100px;background:#fcfcfc;padding-left:18px"><i class="dd"></i><span class=k>난방조견표</span></div>
<div class="c" style="left:1202px;top:398px;width:100px;background:#fcfcfc;padding-left:18px"><i class="dd"></i><span class=k>음식물조견</span>1</div>
<div class="c" style="left:1302px;top:398px;width:100px;background:#fcfcfc;padding-left:18px"><i class="dd"></i></div>
<div class="c" style="left:1402px;top:398px;width:100px;background:#fcfcfc;padding-left:18px"><i class="dd"></i></div>
<div class="c" style="left:1502px;top:398px;width:100px;background:#fcfcfc;padding-left:18px"><i class="dd"></i></div>
<div class="c" style="left:1602px;top:398px;width:100px;background:#fcfcfc;padding-left:18px"><i class="dd"></i></div>
<div class="c" style="left:1702px;top:398px;width:100px;background:#fcfcfc;padding-left:18px"><i class="dd"></i></div>
<div class="c" style="left:1802px;top:398px;width:60px;background:#fcfcfc"><svg class="a" style="left:22px;top:4px" width="16" height="17" viewBox="0 0 16 17"><rect width="16" height="17" fill="#3c9aea"/><path d="M1.6 6.2l5 5.6 8-8.6" fill="none" stroke="#fff" stroke-width="1.3"/></svg></div>
<div class="c" style="left:1862px;top:398px;width:20px;background:#fcfcfc"></div>
<div class="c" style="left:372px;top:423px;width:50px;background:#f1f1f1">103</div>
<div class="c" style="left:422px;top:423px;width:80px;background:#f1f1f1"><span class=k>아파트</span></div>
<div class="c" style="left:502px;top:423px;width:100px;background:#ffffff;padding-left:18px"><i class="dd"></i><span class=k>고압</span></div>
<div class="c" style="left:602px;top:423px;width:100px;background:#ffffff;padding-left:18px"><i class="dd"></i><span class=k>상수조견</span>1</div>
<div class="c" style="left:702px;top:423px;width:100px;background:#ffffff;padding-left:18px"><i class="dd"></i><span class=k>하수조견</span>1</div>
<div class="c" style="left:802px;top:423px;width:100px;background:#ffffff;padding-left:18px"><i class="dd"></i><span class=k>온수조견</span>1</div>
<div class="c" style="left:902px;top:423px;width:100px;background:#ffffff;padding-left:18px"><i class="dd"></i><span class=k>정수조견표</span></div>
<div class="c" style="left:1002px;top:423px;width:100px;background:#ffffff;padding-left:18px"><i class="dd"></i><span class=k>가스조견표</span></div>
<div class="c" style="left:1102px;top:423px;width:100px;background:#ffffff;padding-left:18px"><i class="dd"></i><span class=k>난방조견표</span></div>
<div class="c" style="left:1202px;top:423px;width:100px;background:#ffffff;padding-left:18px"><i class="dd"></i><span class=k>음식물조견</span>1</div>
<div class="c" style="left:1302px;top:423px;width:100px;background:#ffffff;padding-left:18px"><i class="dd"></i></div>
<div class="c" style="left:1402px;top:423px;width:100px;background:#ffffff;padding-left:18px"><i class="dd"></i></div>
<div class="c" style="left:1502px;top:423px;width:100px;background:#ffffff;padding-left:18px"><i class="dd"></i></div>
<div class="c" style="left:1602px;top:423px;width:100px;background:#ffffff;padding-left:18px"><i class="dd"></i></div>
<div class="c" style="left:1702px;top:423px;width:100px;background:#ffffff;padding-left:18px"><i class="dd"></i></div>
<div class="c" style="left:1802px;top:423px;width:60px;background:#ffffff"><svg class="a" style="left:22px;top:4px" width="16" height="17" viewBox="0 0 16 17"><rect width="16" height="17" fill="#3c9aea"/><path d="M1.6 6.2l5 5.6 8-8.6" fill="none" stroke="#fff" stroke-width="1.3"/></svg></div>
<div class="c" style="left:1862px;top:423px;width:20px;background:#ffffff"></div>
<div class="c" style="left:372px;top:448px;width:50px;background:#f1f1f1">105</div>
<div class="c" style="left:422px;top:448px;width:80px;background:#f1f1f1"><span class=k>아파트</span></div>
<div class="c" style="left:502px;top:448px;width:100px;background:#fcfcfc;padding-left:18px"><i class="dd"></i><span class=k>고압</span></div>
<div class="c" style="left:602px;top:448px;width:100px;background:#fcfcfc;padding-left:18px"><i class="dd"></i><span class=k>상수조견</span>1</div>
<div class="c" style="left:702px;top:448px;width:100px;background:#fcfcfc;padding-left:18px"><i class="dd"></i><span class=k>하수조견</span>1</div>
<div class="c" style="left:802px;top:448px;width:100px;background:#fcfcfc;padding-left:18px"><i class="dd"></i><span class=k>온수조견</span>1</div>
<div class="c" style="left:902px;top:448px;width:100px;background:#fcfcfc;padding-left:18px"><i class="dd"></i><span class=k>정수조견표</span></div>
<div class="c" style="left:1002px;top:448px;width:100px;background:#fcfcfc;padding-left:18px"><i class="dd"></i><span class=k>가스조견표</span></div>
<div class="c" style="left:1102px;top:448px;width:100px;background:#fcfcfc;padding-left:18px"><i class="dd"></i><span class=k>난방조견표</span></div>
<div class="c" style="left:1202px;top:448px;width:100px;background:#fcfcfc;padding-left:18px"><i class="dd"></i><span class=k>음식물조견</span>1</div>
<div class="c" style="left:1302px;top:448px;width:100px;background:#fcfcfc;padding-left:18px"><i class="dd"></i></div>
<div class="c" style="left:1402px;top:448px;width:100px;background:#fcfcfc;padding-left:18px"><i class="dd"></i></div>
<div class="c" style="left:1502px;top:448px;width:100px;background:#fcfcfc;padding-left:18px"><i class="dd"></i></div>
<div class="c" style="left:1602px;top:448px;width:100px;background:#fcfcfc;padding-left:18px"><i class="dd"></i></div>
<div class="c" style="left:1702px;top:448px;width:100px;background:#fcfcfc;padding-left:18px"><i class="dd"></i></div>
<div class="c" style="left:1802px;top:448px;width:60px;background:#fcfcfc"><svg class="a" style="left:22px;top:4px" width="16" height="17" viewBox="0 0 16 17"><rect width="16" height="17" fill="#3c9aea"/><path d="M1.6 6.2l5 5.6 8-8.6" fill="none" stroke="#fff" stroke-width="1.3"/></svg></div>
<div class="c" style="left:1862px;top:448px;width:20px;background:#fcfcfc"></div>
<div class="c" style="left:372px;top:473px;width:50px;background:#f1f1f1">201</div>
<div class="c" style="left:422px;top:473px;width:80px;background:#f1f1f1"><span class=k>아파트</span></div>
<div class="c" style="left:502px;top:473px;width:100px;background:#ffffff;padding-left:18px"><i class="dd"></i><span class=k>고압</span></div>
<div class="c" style="left:602px;top:473px;width:100px;background:#ffffff;padding-left:18px"><i class="dd"></i><span class=k>상수조견</span>1</div>
<div class="c" style="left:702px;top:473px;width:100px;background:#ffffff;padding-left:18px"><i class="dd"></i><span class=k>하수조견</span>1</div>
<div class="c" style="left:802px;top:473px;width:100px;background:#ffffff;padding-left:18px"><i class="dd"></i><span class=k>온수조견</span>1</div>
<div class="c" style="left:902px;top:473px;width:100px;background:#ffffff;padding-left:18px"><i class="dd"></i><span class=k>정수조견표</span></div>
<div class="c" style="left:1002px;top:473px;width:100px;background:#ffffff;padding-left:18px"><i class="dd"></i><span class=k>가스조견표</span></div>
<div class="c" style="left:1102px;top:473px;width:100px;background:#ffffff;padding-left:18px"><i class="dd"></i><span class=k>난방조견표</span></div>
<div class="c" style="left:1202px;top:473px;width:100px;background:#ffffff;padding-left:18px"><i class="dd"></i><span class=k>음식물조견</span>1</div>
<div class="c" style="left:1302px;top:473px;width:100px;background:#ffffff;padding-left:18px"><i class="dd"></i></div>
<div class="c" style="left:1402px;top:473px;width:100px;background:#ffffff;padding-left:18px"><i class="dd"></i></div>
<div class="c" style="left:1502px;top:473px;width:100px;background:#ffffff;padding-left:18px"><i class="dd"></i></div>
<div class="c" style="left:1602px;top:473px;width:100px;background:#ffffff;padding-left:18px"><i class="dd"></i></div>
<div class="c" style="left:1702px;top:473px;width:100px;background:#ffffff;padding-left:18px"><i class="dd"></i></div>
<div class="c" style="left:1802px;top:473px;width:60px;background:#ffffff"><svg class="a" style="left:22px;top:4px" width="16" height="17" viewBox="0 0 16 17"><rect width="16" height="17" fill="#3c9aea"/><path d="M1.6 6.2l5 5.6 8-8.6" fill="none" stroke="#fff" stroke-width="1.3"/></svg></div>
<div class="c" style="left:1862px;top:473px;width:20px;background:#ffffff"></div>
<div class="c" style="left:372px;top:498px;width:50px;background:#f1f1f1">202</div>
<div class="c" style="left:422px;top:498px;width:80px;background:#f1f1f1"><span class=k>아파트</span></div>
<div class="c" style="left:502px;top:498px;width:100px;background:#fcfcfc;padding-left:18px"><i class="dd"></i><span class=k>고압</span></div>
<div class="c" style="left:602px;top:498px;width:100px;background:#fcfcfc;padding-left:18px"><i class="dd"></i><span class=k>상수조견</span>1</div>
<div class="c" style="left:702px;top:498px;width:100px;background:#fcfcfc;padding-left:18px"><i class="dd"></i><span class=k>하수조견</span>1</div>
<div class="c" style="left:802px;top:498px;width:100px;background:#fcfcfc;padding-left:18px"><i class="dd"></i><span class=k>온수조견</span>1</div>
<div class="c" style="left:902px;top:498px;width:100px;background:#fcfcfc;padding-left:18px"><i class="dd"></i><span class=k>정수조견표</span></div>
<div class="c" style="left:1002px;top:498px;width:100px;background:#fcfcfc;padding-left:18px"><i class="dd"></i><span class=k>가스조견표</span></div>
<div class="c" style="left:1102px;top:498px;width:100px;background:#fcfcfc;padding-left:18px"><i class="dd"></i><span class=k>난방조견표</span></div>
<div class="c" style="left:1202px;top:498px;width:100px;background:#fcfcfc;padding-left:18px"><i class="dd"></i><span class=k>음식물조견</span>1</div>
<div class="c" style="left:1302px;top:498px;width:100px;background:#fcfcfc;padding-left:18px"><i class="dd"></i></div>
<div class="c" style="left:1402px;top:498px;width:100px;background:#fcfcfc;padding-left:18px"><i class="dd"></i></div>
<div class="c" style="left:1502px;top:498px;width:100px;background:#fcfcfc;padding-left:18px"><i class="dd"></i></div>
<div class="c" style="left:1602px;top:498px;width:100px;background:#fcfcfc;padding-left:18px"><i class="dd"></i></div>
<div class="c" style="left:1702px;top:498px;width:100px;background:#fcfcfc;padding-left:18px"><i class="dd"></i></div>
<div class="c" style="left:1802px;top:498px;width:60px;background:#fcfcfc"><svg class="a" style="left:22px;top:4px" width="16" height="17" viewBox="0 0 16 17"><rect width="16" height="17" fill="#3c9aea"/><path d="M1.6 6.2l5 5.6 8-8.6" fill="none" stroke="#fff" stroke-width="1.3"/></svg></div>
<div class="c" style="left:1862px;top:498px;width:20px;background:#fcfcfc"></div>
<div class="c" style="left:372px;top:523px;width:50px;background:#f1f1f1">203</div>
<div class="c" style="left:422px;top:523px;width:80px;background:#f1f1f1"><span class=k>아파트</span></div>
<div class="c" style="left:502px;top:523px;width:100px;background:#ffffff;padding-left:18px"><i class="dd"></i><span class=k>고압</span></div>
<div class="c" style="left:602px;top:523px;width:100px;background:#ffffff;padding-left:18px"><i class="dd"></i><span class=k>상수조견</span>1</div>
<div class="c" style="left:702px;top:523px;width:100px;background:#ffffff;padding-left:18px"><i class="dd"></i><span class=k>하수조견</span>1</div>
<div class="c" style="left:802px;top:523px;width:100px;background:#ffffff;padding-left:18px"><i class="dd"></i><span class=k>온수조견</span>1</div>
<div class="c" style="left:902px;top:523px;width:100px;background:#ffffff;padding-left:18px"><i class="dd"></i><span class=k>정수조견표</span></div>
<div class="c" style="left:1002px;top:523px;width:100px;background:#ffffff;padding-left:18px"><i class="dd"></i><span class=k>가스조견표</span></div>
<div class="c" style="left:1102px;top:523px;width:100px;background:#ffffff;padding-left:18px"><i class="dd"></i><span class=k>난방조견표</span></div>
<div class="c" style="left:1202px;top:523px;width:100px;background:#ffffff;padding-left:18px"><i class="dd"></i><span class=k>음식물조견</span>1</div>
<div class="c" style="left:1302px;top:523px;width:100px;background:#ffffff;padding-left:18px"><i class="dd"></i></div>
<div class="c" style="left:1402px;top:523px;width:100px;background:#ffffff;padding-left:18px"><i class="dd"></i></div>
<div class="c" style="left:1502px;top:523px;width:100px;background:#ffffff;padding-left:18px"><i class="dd"></i></div>
<div class="c" style="left:1602px;top:523px;width:100px;background:#ffffff;padding-left:18px"><i class="dd"></i></div>
<div class="c" style="left:1702px;top:523px;width:100px;background:#ffffff;padding-left:18px"><i class="dd"></i></div>
<div class="c" style="left:1802px;top:523px;width:60px;background:#ffffff"><svg class="a" style="left:22px;top:4px" width="16" height="17" viewBox="0 0 16 17"><rect width="16" height="17" fill="#3c9aea"/><path d="M1.6 6.2l5 5.6 8-8.6" fill="none" stroke="#fff" stroke-width="1.3"/></svg></div>
<div class="c" style="left:1862px;top:523px;width:20px;background:#ffffff"></div>
<div class="c" style="left:372px;top:548px;width:50px;background:#e2e8ee">205</div>
<div class="c" style="left:422px;top:548px;width:80px;background:#e2e8ee"><span class=k>아파트</span></div>
<div class="c" style="left:502px;top:548px;width:100px;background:#eef4f9;padding-left:18px"><i class="dd"></i><span class=k>고압</span></div>
<div class="c" style="left:602px;top:548px;width:100px;background:#eef4f9;padding-left:18px"><i class="dd"></i><span class=k>상수조견</span>1</div>
<div class="c" style="left:702px;top:548px;width:100px;background:#eef4f9;padding-left:18px"><i class="dd"></i><span class=k>하수조견</span>1</div>
<div class="c" style="left:802px;top:548px;width:100px;background:#eef4f9;padding-left:18px"><i class="dd"></i><span class=k>온수조견</span>1</div>
<div class="c" style="left:902px;top:548px;width:100px;background:#b2e1e8;padding-left:18px"><i class="dd"></i><span class=k>정수조견표</span></div>
<div class="c" style="left:1002px;top:548px;width:100px;background:#eef4f9;padding-left:18px"><i class="dd"></i><span class=k>가스조견표</span></div>
<div class="c" style="left:1102px;top:548px;width:100px;background:#eef4f9;padding-left:18px"><i class="dd"></i><span class=k>난방조견표</span></div>
<div class="c" style="left:1202px;top:548px;width:100px;background:#eef4f9;padding-left:18px"><i class="dd"></i><span class=k>음식물조견</span>1</div>
<div class="c" style="left:1302px;top:548px;width:100px;background:#eef4f9;padding-left:18px"><i class="dd"></i></div>
<div class="c" style="left:1402px;top:548px;width:100px;background:#eef4f9;padding-left:18px"><i class="dd"></i></div>
<div class="c" style="left:1502px;top:548px;width:100px;background:#eef4f9;padding-left:18px"><i class="dd"></i></div>
<div class="c" style="left:1602px;top:548px;width:100px;background:#eef4f9;padding-left:18px"><i class="dd"></i></div>
<div class="c" style="left:1702px;top:548px;width:100px;background:#eef4f9;padding-left:18px"><i class="dd"></i></div>
<div class="c" style="left:1802px;top:548px;width:60px;background:#eef4f9"><svg class="a" style="left:22px;top:4px" width="16" height="17" viewBox="0 0 16 17"><rect width="16" height="17" fill="#3c9aea"/><path d="M1.6 6.2l5 5.6 8-8.6" fill="none" stroke="#fff" stroke-width="1.3"/></svg></div>
<div class="c" style="left:1862px;top:548px;width:20px;background:#eef4f9"></div>
<div class="c" style="left:372px;top:573px;width:50px;background:#f1f1f1">301</div>
<div class="c" style="left:422px;top:573px;width:80px;background:#f1f1f1"><span class=k>아파트</span></div>
<div class="c" style="left:502px;top:573px;width:100px;background:#ffffff;padding-left:18px"><i class="dd"></i><span class=k>고압</span></div>
<div class="c" style="left:602px;top:573px;width:100px;background:#ffffff;padding-left:18px"><i class="dd"></i><span class=k>상수조견</span>1</div>
<div class="c" style="left:702px;top:573px;width:100px;background:#ffffff;padding-left:18px"><i class="dd"></i><span class=k>하수조견</span>1</div>
<div class="c" style="left:802px;top:573px;width:100px;background:#ffffff;padding-left:18px"><i class="dd"></i><span class=k>온수조견</span>1</div>
<div class="c" style="left:902px;top:573px;width:100px;background:#ffffff;padding-left:18px"><i class="dd"></i><span class=k>정수조견표</span></div>
<div class="c" style="left:1002px;top:573px;width:100px;background:#ffffff;padding-left:18px"><i class="dd"></i><span class=k>가스조견표</span></div>
<div class="c" style="left:1102px;top:573px;width:100px;background:#ffffff;padding-left:18px"><i class="dd"></i><span class=k>난방조견표</span></div>
<div class="c" style="left:1202px;top:573px;width:100px;background:#ffffff;padding-left:18px"><i class="dd"></i><span class=k>음식물조견</span>1</div>
<div class="c" style="left:1302px;top:573px;width:100px;background:#ffffff;padding-left:18px"><i class="dd"></i></div>
<div class="c" style="left:1402px;top:573px;width:100px;background:#ffffff;padding-left:18px"><i class="dd"></i></div>
<div class="c" style="left:1502px;top:573px;width:100px;background:#ffffff;padding-left:18px"><i class="dd"></i></div>
<div class="c" style="left:1602px;top:573px;width:100px;background:#ffffff;padding-left:18px"><i class="dd"></i></div>
<div class="c" style="left:1702px;top:573px;width:100px;background:#ffffff;padding-left:18px"><i class="dd"></i></div>
<div class="c" style="left:1802px;top:573px;width:60px;background:#ffffff"><svg class="a" style="left:22px;top:4px" width="16" height="17" viewBox="0 0 16 17"><rect width="16" height="17" fill="#3c9aea"/><path d="M1.6 6.2l5 5.6 8-8.6" fill="none" stroke="#fff" stroke-width="1.3"/></svg></div>
<div class="c" style="left:1862px;top:573px;width:20px;background:#ffffff"></div>
<div class="c" style="left:372px;top:598px;width:50px;background:#f1f1f1">302</div>
<div class="c" style="left:422px;top:598px;width:80px;background:#f1f1f1"><span class=k>아파트</span></div>
<div class="c" style="left:502px;top:598px;width:100px;background:#fcfcfc;padding-left:18px"><i class="dd"></i><span class=k>고압</span></div>
<div class="c" style="left:602px;top:598px;width:100px;background:#fcfcfc;padding-left:18px"><i class="dd"></i><span class=k>상수조견</span>1</div>
<div class="c" style="left:702px;top:598px;width:100px;background:#fcfcfc;padding-left:18px"><i class="dd"></i><span class=k>하수조견</span>1</div>
<div class="c" style="left:802px;top:598px;width:100px;background:#fcfcfc;padding-left:18px"><i class="dd"></i><span class=k>온수조견</span>1</div>
<div class="c" style="left:902px;top:598px;width:100px;background:#fcfcfc;padding-left:18px"><i class="dd"></i><span class=k>정수조견표</span></div>
<div class="c" style="left:1002px;top:598px;width:100px;background:#fcfcfc;padding-left:18px"><i class="dd"></i><span class=k>가스조견표</span></div>
<div class="c" style="left:1102px;top:598px;width:100px;background:#fcfcfc;padding-left:18px"><i class="dd"></i><span class=k>난방조견표</span></div>
<div class="c" style="left:1202px;top:598px;width:100px;background:#fcfcfc;padding-left:18px"><i class="dd"></i><span class=k>음식물조견</span>1</div>
<div class="c" style="left:1302px;top:598px;width:100px;background:#fcfcfc;padding-left:18px"><i class="dd"></i></div>
<div class="c" style="left:1402px;top:598px;width:100px;background:#fcfcfc;padding-left:18px"><i class="dd"></i></div>
<div class="c" style="left:1502px;top:598px;width:100px;background:#fcfcfc;padding-left:18px"><i class="dd"></i></div>
<div class="c" style="left:1602px;top:598px;width:100px;background:#fcfcfc;padding-left:18px"><i class="dd"></i></div>
<div class="c" style="left:1702px;top:598px;width:100px;background:#fcfcfc;padding-left:18px"><i class="dd"></i></div>
<div class="c" style="left:1802px;top:598px;width:60px;background:#fcfcfc"><svg class="a" style="left:22px;top:4px" width="16" height="17" viewBox="0 0 16 17"><rect width="16" height="17" fill="#3c9aea"/><path d="M1.6 6.2l5 5.6 8-8.6" fill="none" stroke="#fff" stroke-width="1.3"/></svg></div>
<div class="c" style="left:1862px;top:598px;width:20px;background:#fcfcfc"></div>
<div class="c" style="left:372px;top:623px;width:50px;background:#f1f1f1">303</div>
<div class="c" style="left:422px;top:623px;width:80px;background:#f1f1f1"><span class=k>아파트</span></div>
<div class="c" style="left:502px;top:623px;width:100px;background:#ffffff;padding-left:18px"><i class="dd"></i><span class=k>고압</span></div>
<div class="c" style="left:602px;top:623px;width:100px;background:#ffffff;padding-left:18px"><i class="dd"></i><span class=k>상수조견</span>1</div>
<div class="c" style="left:702px;top:623px;width:100px;background:#ffffff;padding-left:18px"><i class="dd"></i><span class=k>하수조견</span>1</div>
<div class="c" style="left:802px;top:623px;width:100px;background:#ffffff;padding-left:18px"><i class="dd"></i><span class=k>온수조견</span>1</div>
<div class="c" style="left:902px;top:623px;width:100px;background:#ffffff;padding-left:18px"><i class="dd"></i><span class=k>정수조견표</span></div>
<div class="c" style="left:1002px;top:623px;width:100px;background:#ffffff;padding-left:18px"><i class="dd"></i><span class=k>가스조견표</span></div>
<div class="c" style="left:1102px;top:623px;width:100px;background:#ffffff;padding-left:18px"><i class="dd"></i><span class=k>난방조견표</span></div>
<div class="c" style="left:1202px;top:623px;width:100px;background:#ffffff;padding-left:18px"><i class="dd"></i><span class=k>음식물조견</span>1</div>
<div class="c" style="left:1302px;top:623px;width:100px;background:#ffffff;padding-left:18px"><i class="dd"></i></div>
<div class="c" style="left:1402px;top:623px;width:100px;background:#ffffff;padding-left:18px"><i class="dd"></i></div>
<div class="c" style="left:1502px;top:623px;width:100px;background:#ffffff;padding-left:18px"><i class="dd"></i></div>
<div class="c" style="left:1602px;top:623px;width:100px;background:#ffffff;padding-left:18px"><i class="dd"></i></div>
<div class="c" style="left:1702px;top:623px;width:100px;background:#ffffff;padding-left:18px"><i class="dd"></i></div>
<div class="c" style="left:1802px;top:623px;width:60px;background:#ffffff"><svg class="a" style="left:22px;top:4px" width="16" height="17" viewBox="0 0 16 17"><rect width="16" height="17" fill="#3c9aea"/><path d="M1.6 6.2l5 5.6 8-8.6" fill="none" stroke="#fff" stroke-width="1.3"/></svg></div>
<div class="c" style="left:1862px;top:623px;width:20px;background:#ffffff"></div>
<div class="c" style="left:372px;top:648px;width:50px;background:#f1f1f1">305</div>
<div class="c" style="left:422px;top:648px;width:80px;background:#f1f1f1"><span class=k>아파트</span></div>
<div class="c" style="left:502px;top:648px;width:100px;background:#fcfcfc;padding-left:18px"><i class="dd"></i><span class=k>고압</span></div>
<div class="c" style="left:602px;top:648px;width:100px;background:#fcfcfc;padding-left:18px"><i class="dd"></i><span class=k>상수조견</span>1</div>
<div class="c" style="left:702px;top:648px;width:100px;background:#fcfcfc;padding-left:18px"><i class="dd"></i><span class=k>하수조견</span>1</div>
<div class="c" style="left:802px;top:648px;width:100px;background:#fcfcfc;padding-left:18px"><i class="dd"></i><span class=k>온수조견</span>1</div>
<div class="c" style="left:902px;top:648px;width:100px;background:#fcfcfc;padding-left:18px"><i class="dd"></i><span class=k>정수조견표</span></div>
<div class="c" style="left:1002px;top:648px;width:100px;background:#fcfcfc;padding-left:18px"><i class="dd"></i><span class=k>가스조견표</span></div>
<div class="c" style="left:1102px;top:648px;width:100px;background:#fcfcfc;padding-left:18px"><i class="dd"></i><span class=k>난방조견표</span></div>
<div class="c" style="left:1202px;top:648px;width:100px;background:#fcfcfc;padding-left:18px"><i class="dd"></i><span class=k>음식물조견</span>1</div>
<div class="c" style="left:1302px;top:648px;width:100px;background:#fcfcfc;padding-left:18px"><i class="dd"></i></div>
<div class="c" style="left:1402px;top:648px;width:100px;background:#fcfcfc;padding-left:18px"><i class="dd"></i></div>
<div class="c" style="left:1502px;top:648px;width:100px;background:#fcfcfc;padding-left:18px"><i class="dd"></i></div>
<div class="c" style="left:1602px;top:648px;width:100px;background:#fcfcfc;padding-left:18px"><i class="dd"></i></div>
<div class="c" style="left:1702px;top:648px;width:100px;background:#fcfcfc;padding-left:18px"><i class="dd"></i></div>
<div class="c" style="left:1802px;top:648px;width:60px;background:#fcfcfc"><svg class="a" style="left:22px;top:4px" width="16" height="17" viewBox="0 0 16 17"><rect width="16" height="17" fill="#3c9aea"/><path d="M1.6 6.2l5 5.6 8-8.6" fill="none" stroke="#fff" stroke-width="1.3"/></svg></div>
<div class="c" style="left:1862px;top:648px;width:20px;background:#fcfcfc"></div>
<div class="c" style="left:372px;top:673px;width:50px;background:#f1f1f1">401</div>
<div class="c" style="left:422px;top:673px;width:80px;background:#f1f1f1"><span class=k>아파트</span></div>
<div class="c" style="left:502px;top:673px;width:100px;background:#ffffff;padding-left:18px"><i class="dd"></i><span class=k>고압</span></div>
<div class="c" style="left:602px;top:673px;width:100px;background:#ffffff;padding-left:18px"><i class="dd"></i><span class=k>상수조견</span>1</div>
<div class="c" style="left:702px;top:673px;width:100px;background:#ffffff;padding-left:18px"><i class="dd"></i><span class=k>하수조견</span>1</div>
<div class="c" style="left:802px;top:673px;width:100px;background:#ffffff;padding-left:18px"><i class="dd"></i><span class=k>온수조견</span>1</div>
<div class="c" style="left:902px;top:673px;width:100px;background:#ffffff;padding-left:18px"><i class="dd"></i><span class=k>정수조견표</span></div>
<div class="c" style="left:1002px;top:673px;width:100px;background:#ffffff;padding-left:18px"><i class="dd"></i><span class=k>가스조견표</span></div>
<div class="c" style="left:1102px;top:673px;width:100px;background:#ffffff;padding-left:18px"><i class="dd"></i><span class=k>난방조견표</span></div>
<div class="c" style="left:1202px;top:673px;width:100px;background:#ffffff;padding-left:18px"><i class="dd"></i><span class=k>음식물조견</span>1</div>
<div class="c" style="left:1302px;top:673px;width:100px;background:#ffffff;padding-left:18px"><i class="dd"></i></div>
<div class="c" style="left:1402px;top:673px;width:100px;background:#ffffff;padding-left:18px"><i class="dd"></i></div>
<div class="c" style="left:1502px;top:673px;width:100px;background:#ffffff;padding-left:18px"><i class="dd"></i></div>
<div class="c" style="left:1602px;top:673px;width:100px;background:#ffffff;padding-left:18px"><i class="dd"></i></div>
<div class="c" style="left:1702px;top:673px;width:100px;background:#ffffff;padding-left:18px"><i class="dd"></i></div>
<div class="c" style="left:1802px;top:673px;width:60px;background:#ffffff"><svg class="a" style="left:22px;top:4px" width="16" height="17" viewBox="0 0 16 17"><rect width="16" height="17" fill="#3c9aea"/><path d="M1.6 6.2l5 5.6 8-8.6" fill="none" stroke="#fff" stroke-width="1.3"/></svg></div>
<div class="c" style="left:1862px;top:673px;width:20px;background:#ffffff"></div>
<div class="c" style="left:372px;top:698px;width:50px;background:#f1f1f1">402</div>
<div class="c" style="left:422px;top:698px;width:80px;background:#f1f1f1"><span class=k>아파트</span></div>
<div class="c" style="left:502px;top:698px;width:100px;background:#fcfcfc;padding-left:18px"><i class="dd"></i><span class=k>고압</span></div>
<div class="c" style="left:602px;top:698px;width:100px;background:#fcfcfc;padding-left:18px"><i class="dd"></i><span class=k>상수조견</span>1</div>
<div class="c" style="left:702px;top:698px;width:100px;background:#fcfcfc;padding-left:18px"><i class="dd"></i><span class=k>하수조견</span>1</div>
<div class="c" style="left:802px;top:698px;width:100px;background:#fcfcfc;padding-left:18px"><i class="dd"></i><span class=k>온수조견</span>1</div>
<div class="c" style="left:902px;top:698px;width:100px;background:#fcfcfc;padding-left:18px"><i class="dd"></i><span class=k>정수조견표</span></div>
<div class="c" style="left:1002px;top:698px;width:100px;background:#fcfcfc;padding-left:18px"><i class="dd"></i><span class=k>가스조견표</span></div>
<div class="c" style="left:1102px;top:698px;width:100px;background:#fcfcfc;padding-left:18px"><i class="dd"></i><span class=k>난방조견표</span></div>
<div class="c" style="left:1202px;top:698px;width:100px;background:#fcfcfc;padding-left:18px"><i class="dd"></i><span class=k>음식물조견</span>1</div>
<div class="c" style="left:1302px;top:698px;width:100px;background:#fcfcfc;padding-left:18px"><i class="dd"></i></div>
<div class="c" style="left:1402px;top:698px;width:100px;background:#fcfcfc;padding-left:18px"><i class="dd"></i></div>
<div class="c" style="left:1502px;top:698px;width:100px;background:#fcfcfc;padding-left:18px"><i class="dd"></i></div>
<div class="c" style="left:1602px;top:698px;width:100px;background:#fcfcfc;padding-left:18px"><i class="dd"></i></div>
<div class="c" style="left:1702px;top:698px;width:100px;background:#fcfcfc;padding-left:18px"><i class="dd"></i></div>
<div class="c" style="left:1802px;top:698px;width:60px;background:#fcfcfc"><svg class="a" style="left:22px;top:4px" width="16" height="17" viewBox="0 0 16 17"><rect width="16" height="17" fill="#3c9aea"/><path d="M1.6 6.2l5 5.6 8-8.6" fill="none" stroke="#fff" stroke-width="1.3"/></svg></div>
<div class="c" style="left:1862px;top:698px;width:20px;background:#fcfcfc"></div>
<div class="c" style="left:372px;top:723px;width:50px;background:#f1f1f1">403</div>
<div class="c" style="left:422px;top:723px;width:80px;background:#f1f1f1"><span class=k>아파트</span></div>
<div class="c" style="left:502px;top:723px;width:100px;background:#ffffff;padding-left:18px"><i class="dd"></i><span class=k>고압</span></div>
<div class="c" style="left:602px;top:723px;width:100px;background:#ffffff;padding-left:18px"><i class="dd"></i><span class=k>상수조견</span>1</div>
<div class="c" style="left:702px;top:723px;width:100px;background:#ffffff;padding-left:18px"><i class="dd"></i><span class=k>하수조견</span>1</div>
<div class="c" style="left:802px;top:723px;width:100px;background:#ffffff;padding-left:18px"><i class="dd"></i><span class=k>온수조견</span>1</div>
<div class="c" style="left:902px;top:723px;width:100px;background:#ffffff;padding-left:18px"><i class="dd"></i><span class=k>정수조견표</span></div>
<div class="c" style="left:1002px;top:723px;width:100px;background:#ffffff;padding-left:18px"><i class="dd"></i><span class=k>가스조견표</span></div>
<div class="c" style="left:1102px;top:723px;width:100px;background:#ffffff;padding-left:18px"><i class="dd"></i><span class=k>난방조견표</span></div>
<div class="c" style="left:1202px;top:723px;width:100px;background:#ffffff;padding-left:18px"><i class="dd"></i><span class=k>음식물조견</span>1</div>
<div class="c" style="left:1302px;top:723px;width:100px;background:#ffffff;padding-left:18px"><i class="dd"></i></div>
<div class="c" style="left:1402px;top:723px;width:100px;background:#ffffff;padding-left:18px"><i class="dd"></i></div>
<div class="c" style="left:1502px;top:723px;width:100px;background:#ffffff;padding-left:18px"><i class="dd"></i></div>
<div class="c" style="left:1602px;top:723px;width:100px;background:#ffffff;padding-left:18px"><i class="dd"></i></div>
<div class="c" style="left:1702px;top:723px;width:100px;background:#ffffff;padding-left:18px"><i class="dd"></i></div>
<div class="c" style="left:1802px;top:723px;width:60px;background:#ffffff"><svg class="a" style="left:22px;top:4px" width="16" height="17" viewBox="0 0 16 17"><rect width="16" height="17" fill="#3c9aea"/><path d="M1.6 6.2l5 5.6 8-8.6" fill="none" stroke="#fff" stroke-width="1.3"/></svg></div>
<div class="c" style="left:1862px;top:723px;width:20px;background:#ffffff"></div>
<div class="c" style="left:372px;top:748px;width:50px;background:#f1f1f1">405</div>
<div class="c" style="left:422px;top:748px;width:80px;background:#f1f1f1"><span class=k>아파트</span></div>
<div class="c" style="left:502px;top:748px;width:100px;background:#fcfcfc;padding-left:18px"><i class="dd"></i><span class=k>고압</span></div>
<div class="c" style="left:602px;top:748px;width:100px;background:#fcfcfc;padding-left:18px"><i class="dd"></i><span class=k>상수조견</span>1</div>
<div class="c" style="left:702px;top:748px;width:100px;background:#fcfcfc;padding-left:18px"><i class="dd"></i><span class=k>하수조견</span>1</div>
<div class="c" style="left:802px;top:748px;width:100px;background:#fcfcfc;padding-left:18px"><i class="dd"></i><span class=k>온수조견</span>1</div>
<div class="c" style="left:902px;top:748px;width:100px;background:#fcfcfc;padding-left:18px"><i class="dd"></i><span class=k>정수조견표</span></div>
<div class="c" style="left:1002px;top:748px;width:100px;background:#fcfcfc;padding-left:18px"><i class="dd"></i><span class=k>가스조견표</span></div>
<div class="c" style="left:1102px;top:748px;width:100px;background:#fcfcfc;padding-left:18px"><i class="dd"></i><span class=k>난방조견표</span></div>
<div class="c" style="left:1202px;top:748px;width:100px;background:#fcfcfc;padding-left:18px"><i class="dd"></i><span class=k>음식물조견</span>1</div>
<div class="c" style="left:1302px;top:748px;width:100px;background:#fcfcfc;padding-left:18px"><i class="dd"></i></div>
<div class="c" style="left:1402px;top:748px;width:100px;background:#fcfcfc;padding-left:18px"><i class="dd"></i></div>
<div class="c" style="left:1502px;top:748px;width:100px;background:#fcfcfc;padding-left:18px"><i class="dd"></i></div>
<div class="c" style="left:1602px;top:748px;width:100px;background:#fcfcfc;padding-left:18px"><i class="dd"></i></div>
<div class="c" style="left:1702px;top:748px;width:100px;background:#fcfcfc;padding-left:18px"><i class="dd"></i></div>
<div class="c" style="left:1802px;top:748px;width:60px;background:#fcfcfc"><svg class="a" style="left:22px;top:4px" width="16" height="17" viewBox="0 0 16 17"><rect width="16" height="17" fill="#3c9aea"/><path d="M1.6 6.2l5 5.6 8-8.6" fill="none" stroke="#fff" stroke-width="1.3"/></svg></div>
<div class="c" style="left:1862px;top:748px;width:20px;background:#fcfcfc"></div>
<div class="c" style="left:322px;top:373px;width:50px;height:175px;background:#f3f3f3;line-height:14px;padding-top:2px">1</div>
<div class="a" style="left:322px;top:548px;width:50px;height:25px;background:#e2e8ee;"></div>
<div class="c" style="left:322px;top:573px;width:50px;height:200px;background:#f3f3f3"></div>
<div class="a" style="left:321px;top:371px;width:1561px;height:2px;background:#68aeb2;"></div>
<div class="a" style="left:321px;top:372px;width:1px;height:401px;background:#68aeb2;"></div>
<div class="a" style="left:371px;top:372px;width:2px;height:401px;background:#68aeb2;"></div>
<div class="a" style="left:321px;top:772px;width:1561px;height:1px;background:#68aeb2;"></div>
<div class="a" style="left:1881px;top:372px;width:1px;height:401px;background:#68aeb2;"></div>
<div class="a" style="left:321px;top:547px;width:1561px;height:1px;background:#78b6ba;"></div>
<div class="a" style="left:321px;top:572px;width:1561px;height:1px;background:#78b6ba;"></div>
<div class="a" style="left:900px;top:546px;width:103px;height:28px;border:2px solid #7ab8bc"></div>
<div class="a" style="left:321px;top:773px;width:1561px;height:19px;background:#f0f0f0;"></div>
<div class="a" style="left:321px;top:791px;width:1561px;height:1px;background:#d3d6dc;"></div>
<div class="a" style="left:321px;top:773px;width:1px;height:19px;background:#d3d6dc;"></div>
<div class="a" style="left:501px;top:773px;width:1px;height:19px;background:#d3d6dc;"></div>
<div class="a" style="left:1881px;top:773px;width:1px;height:19px;background:#d3d6dc;"></div>
<div class="a" style="left:508px;top:778px;width:0;height:0;border-top:4px solid transparent;border-bottom:4px solid transparent;border-right:4px solid #9a9a9a"></div>
<div class="a" style="left:520px;top:776px;width:633px;height:13px;background:#c1c1c1;"></div>
<div class="a" style="left:1870px;top:778px;width:0;height:0;border-top:4px solid transparent;border-bottom:4px solid transparent;border-left:4px solid #9a9a9a"></div>
<div class="a" style="left:1882px;top:312px;width:16px;height:480px;background:#f0f0f0;"></div>
<div class="a" style="left:1898px;top:312px;width:1px;height:480px;background:#d3d6dc;"></div>
<div class="a" style="left:1882px;top:312px;width:16px;height:1px;background:#d3d6dc;"></div>
<div class="a" style="left:1882px;top:772px;width:16px;height:1px;background:#d3d6dc;"></div>
<div class="a" style="left:1886px;top:319px;width:0;height:0;border-left:4px solid transparent;border-right:4px solid transparent;border-bottom:4px solid #9a9a9a"></div>
<div class="a" style="left:1884px;top:331px;width:13px;height:15px;background:#c1c1c1;"></div>
<div class="a" style="left:1886px;top:762px;width:0;height:0;border-left:4px solid transparent;border-right:4px solid transparent;border-top:4px solid #9a9a9a"></div>
<div class="a" style="left:280px;top:1040px;width:1640px;height:40px;background:#fff;border-top:1px solid #d6d6d6"></div>
<svg class="a" style="left:295px;top:1043px" width="36" height="36" viewBox="0 0 36 36"><circle cx="18" cy="18" r="17.5" fill="#5d6b95"/><circle cx="18" cy="18" r="15" fill="#d8dbe6"/><circle cx="18" cy="18" r="12.5" fill="#2f8fd8"/><path d="M7 14h22v8H7z" fill="#7cc0ef"/><text x="18" y="21" font-size="7" fill="#fff" text-anchor="middle" font-family="Liberation Sans" font-weight="bold">ISMS</text></svg>
<div class="a" style="left:338.40px;top:1051.50px;font-size:13px;line-height:17px;color:#555;font-weight:normal;--k:-1.20px;;letter-spacing:-0.35px"><span class=k>서울시</span> <span class=k>금천구</span> <span class=k>가산디지털</span>2<span class=k>로</span> 98 IT<span class=k>캐슬</span> 2<span class=k>동</span> 714<span class=k>호</span> ©AegisEnterprise Corp.</div>
<div class="a" style="left:1335px;top:1011px;width:220px;height:32px;background:#2f2f2f;border-radius:16px"></div>
<div class="a" style="left:1508px;top:1042px;width:0;height:0;border-left:7px solid transparent;border-right:7px solid transparent;border-top:7px solid #2f2f2f"></div>
<svg class="a" style="left:1349px;top:1020px" width="13" height="14" viewBox="0 0 13 14"><path d="M6.5 1c-2.5 0-4 2-4 4.5v3L1 10.5h11L10.5 8.5v-3C10.5 3 9 1 6.5 1z" fill="#f5b400"/><circle cx="6.5" cy="12" r="1.5" fill="#f5b400"/></svg>
<div class="a" style="left:1367.00px;top:1017.50px;font-size:13px;line-height:17px;color:#fff;font-weight:normal;--k:-1.42px;"><span class=k>읽지</span> <span class=k>않은</span> <span class=k>공문을</span> <span class=k>확인하세요</span>!</div>
<svg class="a" style="left:1529.5px;top:1022px" width="9" height="9" viewBox="0 0 9 9"><path d="M.5 .5L8.5 8.5M8.5 .5L.5 8.5" stroke="#fff" stroke-width="1.4"/></svg>
<div class="a" style="left:1413px;top:1046px;width:160px;height:30px;background:#f0f1f3;border-radius:15px"></div>
<svg class="a" style="left:1434px;top:1052px" width="17" height="18" viewBox="0 0 17 18"><rect x="1" y="5" width="15" height="12" fill="#d9232d"/><rect x="3" y="1" width="11" height="6" fill="#eee" stroke="#ccc" stroke-width=".8"/><text x="8.5" y="15" font-size="6" fill="#fff" text-anchor="middle" font-family="Liberation Sans" font-style="italic" font-weight="bold">Xp</text></svg>
<div class="a" style="left:1458.00px;top:1050.50px;font-size:14px;line-height:18px;color:#333;font-weight:normal;--k:-1.00px;;--kf:0.92em"><span class=k>수신</span> <span class=k>문서</span> <b style="color:#d9232d;font-size:15px">2</b><span class=k>건</span></div>
<div class="a" style="left:1545px;top:1048px;width:25px;height:25px;background:#fff;border-radius:50%"></div>
<svg class="a" style="left:1550px;top:1053px" width="15" height="15" viewBox="0 0 15 15"><path d="M12.5 7.5A5 5 0 1 1 10.5 3.5" fill="none" stroke="#222" stroke-width="1.8"/><path d="M9 1h4.5v4.5z" fill="#222"/></svg>
<div class="a" style="left:1597.50px;top:1051.50px;font-size:13px;line-height:17px;color:#333;font-weight:bold;--k:-1.36px;"><span class=k>개인정보처리방침</span></div>
<div class="a" style="left:1702.00px;top:1051.50px;font-size:13px;line-height:17px;color:#444;font-weight:normal;--k:-1.42px;"><span class=k>이용약관</span></div>
<div class="a" style="left:1765px;top:1046px;width:139px;height:30px;background:#fff;border:1px solid #666;border-radius:3px"></div>
<div class="a" style="left:1774.60px;top:1050.00px;font-size:14px;line-height:18px;color:#222;font-weight:normal;--k:-2.15px;;--kf:0.92em"><span class=k>관련사이트</span></div>
<svg class="a" style="left:1883px;top:1057px" width="12" height="8" viewBox="0 0 12 8"><path d="M1 7l5-5 5 5" fill="none" stroke="#333" stroke-width="1.4"/></svg>
</body></html>
